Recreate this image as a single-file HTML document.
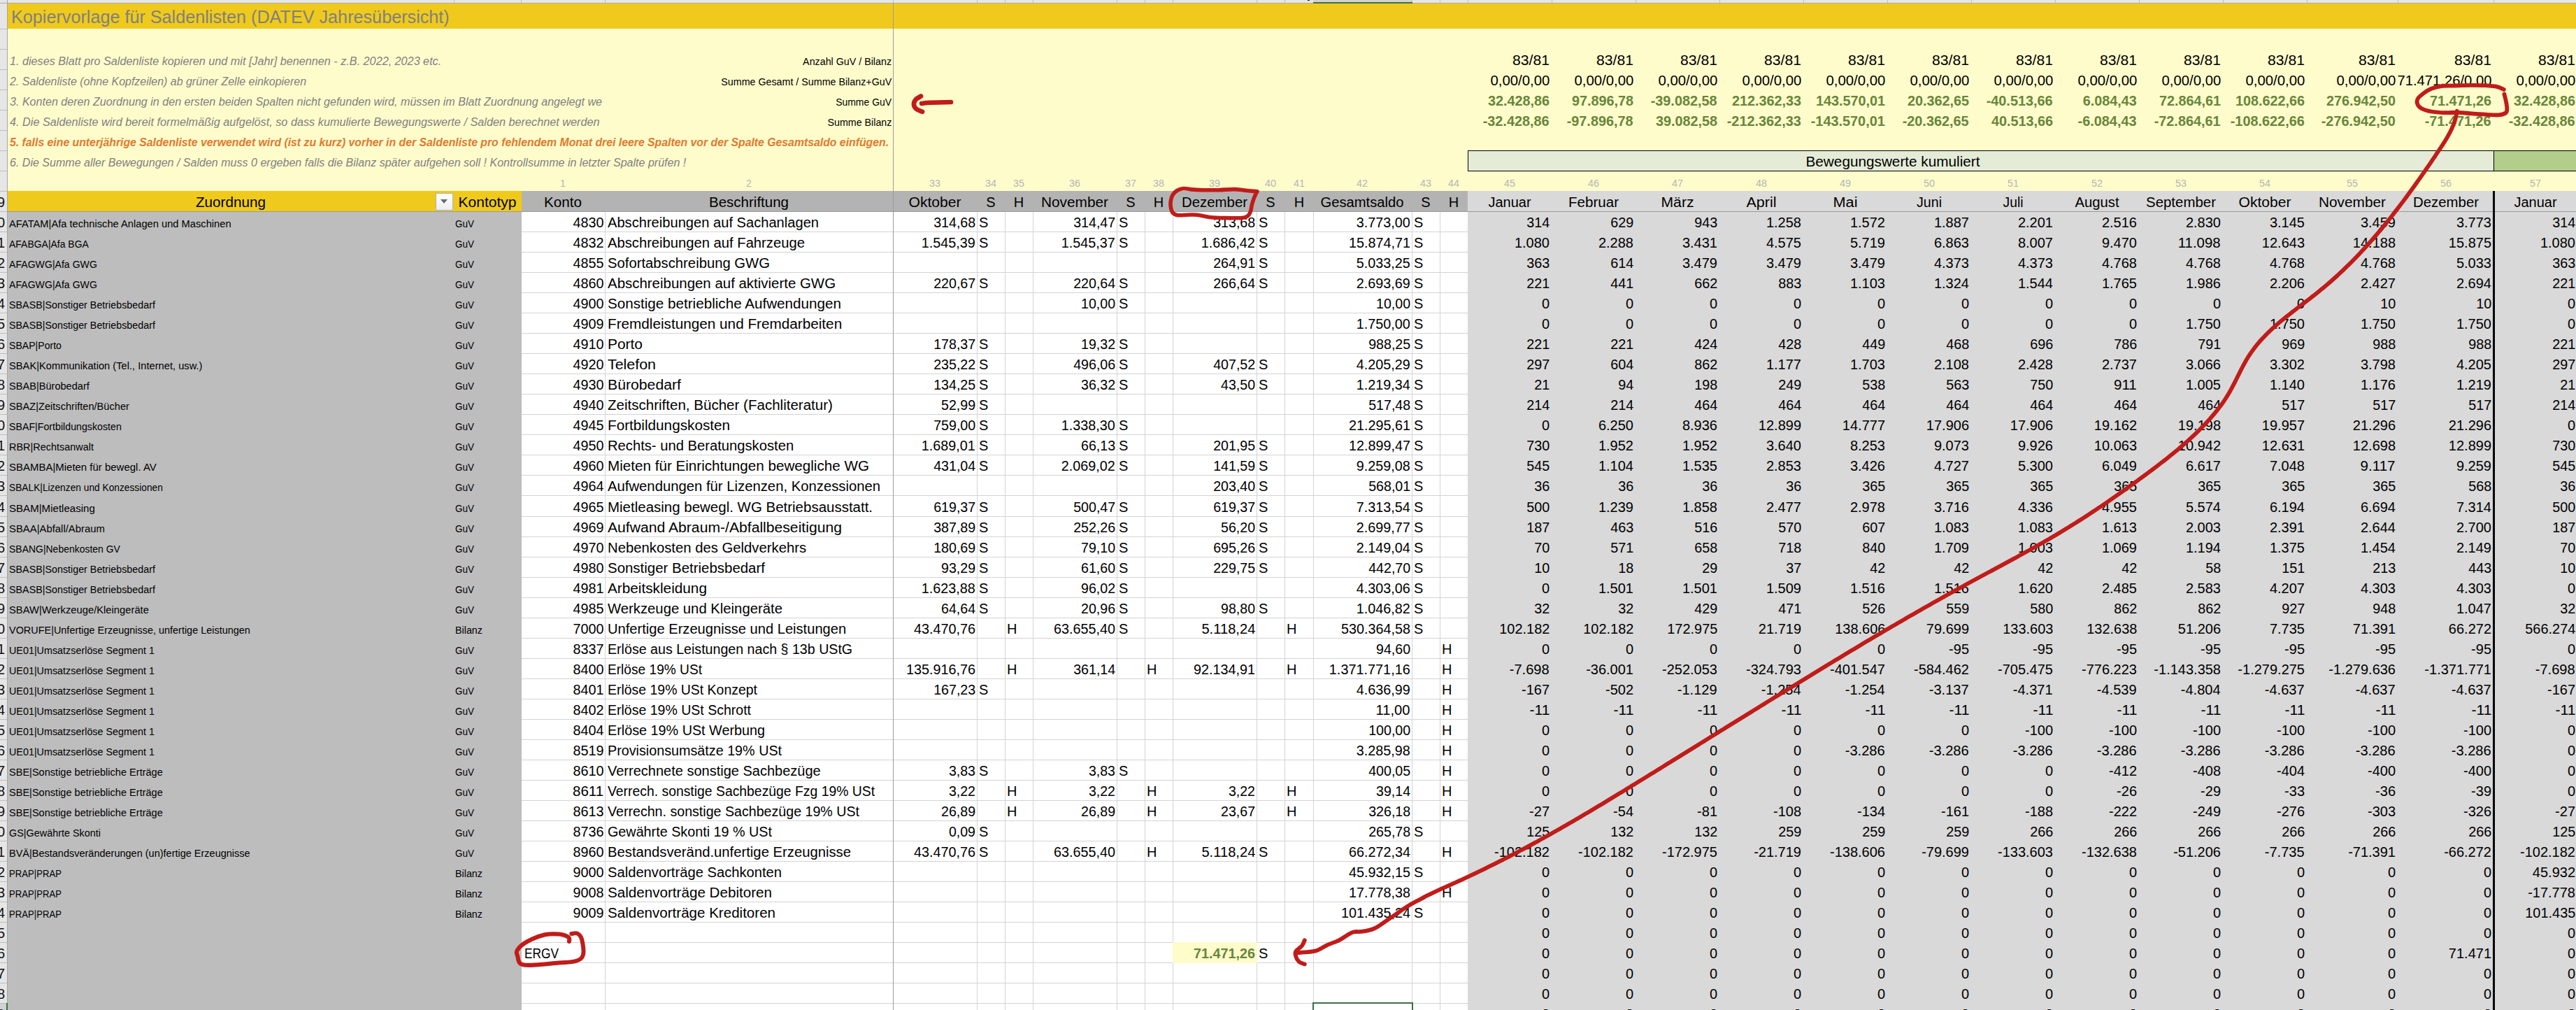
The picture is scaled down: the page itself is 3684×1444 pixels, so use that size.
<!DOCTYPE html><html><head><meta charset="utf-8"><style>

html,body{margin:0;padding:0}
body{width:3684px;height:1444px;overflow:hidden;position:relative;background:#fff;font-family:"Liberation Sans",sans-serif}
b{position:absolute;display:block;box-sizing:content-box}
i{position:absolute;font-style:normal;white-space:nowrap;line-height:0;color:#000;font-size:20px}
.t{font-size:20px}
.g{font-size:20px;font-weight:bold;color:#67863a}
.sm{font-size:14.7px}
.lb{font-size:14.18px}
.in{font-size:16.25px;font-style:italic;color:#808080}
.in5{font-size:15.8px;font-style:italic;font-weight:bold;color:#e07a2e}
.ti{font-size:25.2px;color:#808080}
.cn{font-size:14px;color:#b4b4b4}
.rh{font-size:20px;color:#111}
#rh{position:absolute;left:0;top:0;width:10px;height:1444px;overflow:hidden}
svg{position:absolute;left:0;top:0}

</style></head><body>
<b style="left:0px;top:0px;width:3684px;height:4px;background:#e6e6e6"></b>
<b style="left:0px;top:4px;width:3684px;height:1px;background:#ababab"></b>
<b style="left:649px;top:0px;width:1px;height:4px;background:#bdbdbd"></b>
<b style="left:745px;top:0px;width:1px;height:4px;background:#bdbdbd"></b>
<b style="left:865px;top:0px;width:1px;height:4px;background:#bdbdbd"></b>
<b style="left:1277px;top:0px;width:1px;height:4px;background:#bdbdbd"></b>
<b style="left:1397px;top:0px;width:1px;height:4px;background:#bdbdbd"></b>
<b style="left:1437px;top:0px;width:1px;height:4px;background:#bdbdbd"></b>
<b style="left:1477px;top:0px;width:1px;height:4px;background:#bdbdbd"></b>
<b style="left:1597px;top:0px;width:1px;height:4px;background:#bdbdbd"></b>
<b style="left:1637px;top:0px;width:1px;height:4px;background:#bdbdbd"></b>
<b style="left:1677px;top:0px;width:1px;height:4px;background:#bdbdbd"></b>
<b style="left:1797px;top:0px;width:1px;height:4px;background:#bdbdbd"></b>
<b style="left:1837px;top:0px;width:1px;height:4px;background:#bdbdbd"></b>
<b style="left:1878px;top:0px;width:1px;height:4px;background:#bdbdbd"></b>
<b style="left:2019px;top:0px;width:1px;height:4px;background:#bdbdbd"></b>
<b style="left:2059px;top:0px;width:1px;height:4px;background:#bdbdbd"></b>
<b style="left:2099px;top:0px;width:1px;height:4px;background:#bdbdbd"></b>
<b style="left:2219px;top:0px;width:1px;height:4px;background:#bdbdbd"></b>
<b style="left:2339px;top:0px;width:1px;height:4px;background:#bdbdbd"></b>
<b style="left:2459px;top:0px;width:1px;height:4px;background:#bdbdbd"></b>
<b style="left:2579px;top:0px;width:1px;height:4px;background:#bdbdbd"></b>
<b style="left:2699px;top:0px;width:1px;height:4px;background:#bdbdbd"></b>
<b style="left:2819px;top:0px;width:1px;height:4px;background:#bdbdbd"></b>
<b style="left:2939px;top:0px;width:1px;height:4px;background:#bdbdbd"></b>
<b style="left:3059px;top:0px;width:1px;height:4px;background:#bdbdbd"></b>
<b style="left:3179px;top:0px;width:1px;height:4px;background:#bdbdbd"></b>
<b style="left:3299px;top:0px;width:1px;height:4px;background:#bdbdbd"></b>
<b style="left:3429px;top:0px;width:1px;height:4px;background:#bdbdbd"></b>
<b style="left:3566px;top:0px;width:1px;height:4px;background:#bdbdbd"></b>
<b style="left:1878px;top:0px;width:141px;height:3px;background:#d2d2d2"></b>
<b style="left:1878px;top:3px;width:142px;height:2px;background:#3c6e47"></b>
<b style="left:1870px;top:0px;width:3px;height:1px;background:#111111"></b>
<b style="left:0px;top:5px;width:10px;height:1439px;background:#e6e6e6"></b>
<b style="left:10px;top:0px;width:1px;height:1444px;background:#a6a6a6"></b>
<b style="left:0px;top:41px;width:10px;height:1px;background:#bdbdbd"></b>
<b style="left:0px;top:70px;width:10px;height:1px;background:#bdbdbd"></b>
<b style="left:0px;top:99px;width:10px;height:1px;background:#bdbdbd"></b>
<b style="left:0px;top:128px;width:10px;height:1px;background:#bdbdbd"></b>
<b style="left:0px;top:157px;width:10px;height:1px;background:#bdbdbd"></b>
<b style="left:0px;top:186px;width:10px;height:1px;background:#bdbdbd"></b>
<b style="left:0px;top:215px;width:10px;height:1px;background:#bdbdbd"></b>
<b style="left:0px;top:244px;width:10px;height:1px;background:#bdbdbd"></b>
<b style="left:0px;top:273px;width:10px;height:1px;background:#bdbdbd"></b>
<b style="left:0px;top:302px;width:10px;height:1px;background:#bdbdbd"></b>
<b style="left:0px;top:331px;width:10px;height:1px;background:#bdbdbd"></b>
<b style="left:0px;top:360px;width:10px;height:1px;background:#bdbdbd"></b>
<b style="left:0px;top:389px;width:10px;height:1px;background:#bdbdbd"></b>
<b style="left:0px;top:418px;width:10px;height:1px;background:#bdbdbd"></b>
<b style="left:0px;top:447px;width:10px;height:1px;background:#bdbdbd"></b>
<b style="left:0px;top:476px;width:10px;height:1px;background:#bdbdbd"></b>
<b style="left:0px;top:505px;width:10px;height:1px;background:#bdbdbd"></b>
<b style="left:0px;top:534px;width:10px;height:1px;background:#bdbdbd"></b>
<b style="left:0px;top:563px;width:10px;height:1px;background:#bdbdbd"></b>
<b style="left:0px;top:592px;width:10px;height:1px;background:#bdbdbd"></b>
<b style="left:0px;top:621px;width:10px;height:1px;background:#bdbdbd"></b>
<b style="left:0px;top:650px;width:10px;height:1px;background:#bdbdbd"></b>
<b style="left:0px;top:679px;width:10px;height:1px;background:#bdbdbd"></b>
<b style="left:0px;top:708px;width:10px;height:1px;background:#bdbdbd"></b>
<b style="left:0px;top:738px;width:10px;height:1px;background:#bdbdbd"></b>
<b style="left:0px;top:767px;width:10px;height:1px;background:#bdbdbd"></b>
<b style="left:0px;top:796px;width:10px;height:1px;background:#bdbdbd"></b>
<b style="left:0px;top:825px;width:10px;height:1px;background:#bdbdbd"></b>
<b style="left:0px;top:854px;width:10px;height:1px;background:#bdbdbd"></b>
<b style="left:0px;top:883px;width:10px;height:1px;background:#bdbdbd"></b>
<b style="left:0px;top:912px;width:10px;height:1px;background:#bdbdbd"></b>
<b style="left:0px;top:941px;width:10px;height:1px;background:#bdbdbd"></b>
<b style="left:0px;top:970px;width:10px;height:1px;background:#bdbdbd"></b>
<b style="left:0px;top:999px;width:10px;height:1px;background:#bdbdbd"></b>
<b style="left:0px;top:1028px;width:10px;height:1px;background:#bdbdbd"></b>
<b style="left:0px;top:1057px;width:10px;height:1px;background:#bdbdbd"></b>
<b style="left:0px;top:1086px;width:10px;height:1px;background:#bdbdbd"></b>
<b style="left:0px;top:1115px;width:10px;height:1px;background:#bdbdbd"></b>
<b style="left:0px;top:1144px;width:10px;height:1px;background:#bdbdbd"></b>
<b style="left:0px;top:1173px;width:10px;height:1px;background:#bdbdbd"></b>
<b style="left:0px;top:1202px;width:10px;height:1px;background:#bdbdbd"></b>
<b style="left:0px;top:1231px;width:10px;height:1px;background:#bdbdbd"></b>
<b style="left:0px;top:1260px;width:10px;height:1px;background:#bdbdbd"></b>
<b style="left:0px;top:1289px;width:10px;height:1px;background:#bdbdbd"></b>
<b style="left:0px;top:1318px;width:10px;height:1px;background:#bdbdbd"></b>
<b style="left:0px;top:1347px;width:10px;height:1px;background:#bdbdbd"></b>
<b style="left:0px;top:1376px;width:10px;height:1px;background:#bdbdbd"></b>
<b style="left:0px;top:1405px;width:10px;height:1px;background:#bdbdbd"></b>
<b style="left:0px;top:1434px;width:10px;height:1px;background:#bdbdbd"></b>
<b style="left:0px;top:1435px;width:10px;height:9px;background:#d2d2d2"></b>
<b style="left:9px;top:1434px;width:2px;height:10px;background:#3c6e47"></b>
<b style="left:11px;top:5px;width:3673px;height:36px;background:#efca1c"></b>
<b style="left:11px;top:41px;width:3673px;height:261px;background:#fffccc"></b>
<b style="left:11px;top:273px;width:735px;height:29px;background:#efca1c"></b>
<b style="left:746px;top:273px;width:1353px;height:29px;background:#b3b3b3"></b>
<b style="left:2099px;top:273px;width:1585px;height:29px;background:#d9d9d9"></b>
<b style="left:11px;top:302px;width:3673px;height:1px;background:#9a9a9a"></b>
<b style="left:11px;top:303px;width:735px;height:1141px;background:#bdbdbd"></b>
<b style="left:746px;top:303px;width:1353px;height:1141px;background:#ffffff"></b>
<b style="left:2099px;top:303px;width:1585px;height:1141px;background:#d9d9d9"></b>
<b style="left:865px;top:303px;width:1px;height:1141px;background:#d4d4d4"></b>
<b style="left:1397px;top:303px;width:1px;height:1141px;background:#d4d4d4"></b>
<b style="left:1437px;top:303px;width:1px;height:1141px;background:#d4d4d4"></b>
<b style="left:1477px;top:303px;width:1px;height:1141px;background:#d4d4d4"></b>
<b style="left:1597px;top:303px;width:1px;height:1141px;background:#d4d4d4"></b>
<b style="left:1637px;top:303px;width:1px;height:1141px;background:#d4d4d4"></b>
<b style="left:1677px;top:303px;width:1px;height:1141px;background:#d4d4d4"></b>
<b style="left:1797px;top:303px;width:1px;height:1141px;background:#d4d4d4"></b>
<b style="left:1837px;top:303px;width:1px;height:1141px;background:#d4d4d4"></b>
<b style="left:1878px;top:303px;width:1px;height:1141px;background:#d4d4d4"></b>
<b style="left:2019px;top:303px;width:1px;height:1141px;background:#d4d4d4"></b>
<b style="left:2059px;top:303px;width:1px;height:1141px;background:#d4d4d4"></b>
<b style="left:746px;top:331px;width:1353px;height:1px;background:#d4d4d4"></b>
<b style="left:746px;top:360px;width:1353px;height:1px;background:#d4d4d4"></b>
<b style="left:746px;top:389px;width:1353px;height:1px;background:#d4d4d4"></b>
<b style="left:746px;top:418px;width:1353px;height:1px;background:#d4d4d4"></b>
<b style="left:746px;top:447px;width:1353px;height:1px;background:#d4d4d4"></b>
<b style="left:746px;top:476px;width:1353px;height:1px;background:#d4d4d4"></b>
<b style="left:746px;top:505px;width:1353px;height:1px;background:#d4d4d4"></b>
<b style="left:746px;top:534px;width:1353px;height:1px;background:#d4d4d4"></b>
<b style="left:746px;top:563px;width:1353px;height:1px;background:#d4d4d4"></b>
<b style="left:746px;top:592px;width:1353px;height:1px;background:#d4d4d4"></b>
<b style="left:746px;top:621px;width:1353px;height:1px;background:#d4d4d4"></b>
<b style="left:746px;top:650px;width:1353px;height:1px;background:#d4d4d4"></b>
<b style="left:746px;top:679px;width:1353px;height:1px;background:#d4d4d4"></b>
<b style="left:746px;top:708px;width:1353px;height:1px;background:#d4d4d4"></b>
<b style="left:746px;top:738px;width:1353px;height:1px;background:#d4d4d4"></b>
<b style="left:746px;top:767px;width:1353px;height:1px;background:#d4d4d4"></b>
<b style="left:746px;top:796px;width:1353px;height:1px;background:#d4d4d4"></b>
<b style="left:746px;top:825px;width:1353px;height:1px;background:#d4d4d4"></b>
<b style="left:746px;top:854px;width:1353px;height:1px;background:#d4d4d4"></b>
<b style="left:746px;top:883px;width:1353px;height:1px;background:#d4d4d4"></b>
<b style="left:746px;top:912px;width:1353px;height:1px;background:#d4d4d4"></b>
<b style="left:746px;top:941px;width:1353px;height:1px;background:#d4d4d4"></b>
<b style="left:746px;top:970px;width:1353px;height:1px;background:#d4d4d4"></b>
<b style="left:746px;top:999px;width:1353px;height:1px;background:#d4d4d4"></b>
<b style="left:746px;top:1028px;width:1353px;height:1px;background:#d4d4d4"></b>
<b style="left:746px;top:1057px;width:1353px;height:1px;background:#d4d4d4"></b>
<b style="left:746px;top:1086px;width:1353px;height:1px;background:#d4d4d4"></b>
<b style="left:746px;top:1115px;width:1353px;height:1px;background:#d4d4d4"></b>
<b style="left:746px;top:1144px;width:1353px;height:1px;background:#d4d4d4"></b>
<b style="left:746px;top:1173px;width:1353px;height:1px;background:#d4d4d4"></b>
<b style="left:746px;top:1202px;width:1353px;height:1px;background:#d4d4d4"></b>
<b style="left:746px;top:1231px;width:1353px;height:1px;background:#d4d4d4"></b>
<b style="left:746px;top:1260px;width:1353px;height:1px;background:#d4d4d4"></b>
<b style="left:746px;top:1289px;width:1353px;height:1px;background:#d4d4d4"></b>
<b style="left:746px;top:1318px;width:1353px;height:1px;background:#d4d4d4"></b>
<b style="left:746px;top:1347px;width:1353px;height:1px;background:#d4d4d4"></b>
<b style="left:746px;top:1376px;width:1353px;height:1px;background:#d4d4d4"></b>
<b style="left:746px;top:1405px;width:1353px;height:1px;background:#d4d4d4"></b>
<b style="left:746px;top:1434px;width:1353px;height:1px;background:#d4d4d4"></b>
<b style="left:1277px;top:5px;width:1px;height:1439px;background:#9c9c9c"></b>
<b style="left:1677px;top:1347px;width:121px;height:30px;background:#fffccc"></b>
<b style="left:2099px;top:215px;width:1585px;height:30px;background:#000000"></b>
<b style="left:2100px;top:216px;width:1466px;height:28px;background:#e4ecd7"></b>
<b style="left:3567px;top:216px;width:117px;height:28px;background:#b3cd8a"></b>
<b style="left:3565px;top:273px;width:3px;height:1171px;background:#000000"></b>
<b style="left:1877px;top:1433px;width:140px;height:20px;border:2px solid #3c6e47"></b>
<b style="left:623px;top:276px;width:23px;height:23px;border:1px solid #a9b3c7;background:linear-gradient(#ffffff,#eceef3)"></b>
<b style="left:630px;top:285px;width:0;height:0;border-left:5px solid transparent;border-right:5px solid transparent;border-top:6px solid #6a6a6a"></b>
<i class="rh" style="right:3677px;top:289.07px">9</i>
<i class="rh" style="right:3677px;top:318.07px">0</i>
<i class="rh" style="right:3677px;top:347.07px">1</i>
<i class="rh" style="right:3677px;top:376.07px">2</i>
<i class="rh" style="right:3677px;top:405.07px">3</i>
<i class="rh" style="right:3677px;top:434.07px">4</i>
<i class="rh" style="right:3677px;top:463.07px">5</i>
<i class="rh" style="right:3677px;top:492.07px">6</i>
<i class="rh" style="right:3677px;top:521.07px">7</i>
<i class="rh" style="right:3677px;top:550.07px">8</i>
<i class="rh" style="right:3677px;top:579.07px">9</i>
<i class="rh" style="right:3677px;top:608.07px">0</i>
<i class="rh" style="right:3677px;top:637.07px">1</i>
<i class="rh" style="right:3677px;top:666.07px">2</i>
<i class="rh" style="right:3677px;top:695.07px">3</i>
<i class="rh" style="right:3677px;top:725.07px">4</i>
<i class="rh" style="right:3677px;top:754.07px">5</i>
<i class="rh" style="right:3677px;top:783.07px">6</i>
<i class="rh" style="right:3677px;top:812.07px">7</i>
<i class="rh" style="right:3677px;top:841.07px">8</i>
<i class="rh" style="right:3677px;top:870.07px">9</i>
<i class="rh" style="right:3677px;top:899.07px">0</i>
<i class="rh" style="right:3677px;top:928.07px">1</i>
<i class="rh" style="right:3677px;top:957.07px">2</i>
<i class="rh" style="right:3677px;top:986.07px">3</i>
<i class="rh" style="right:3677px;top:1015.07px">4</i>
<i class="rh" style="right:3677px;top:1044.07px">5</i>
<i class="rh" style="right:3677px;top:1073.07px">6</i>
<i class="rh" style="right:3677px;top:1102.07px">7</i>
<i class="rh" style="right:3677px;top:1131.07px">8</i>
<i class="rh" style="right:3677px;top:1160.07px">9</i>
<i class="rh" style="right:3677px;top:1189.07px">0</i>
<i class="rh" style="right:3677px;top:1218.07px">1</i>
<i class="rh" style="right:3677px;top:1247.07px">2</i>
<i class="rh" style="right:3677px;top:1276.07px">3</i>
<i class="rh" style="right:3677px;top:1305.07px">4</i>
<i class="rh" style="right:3677px;top:1334.07px">5</i>
<i class="rh" style="right:3677px;top:1363.07px">6</i>
<i class="rh" style="right:3677px;top:1392.07px">7</i>
<i class="rh" style="right:3677px;top:1421.07px">8</i>
<i class="rh" style="right:3677px;top:1450.07px">9</i>
<i class="ti" style="left:16px;top:24.34px">Kopiervorlage für Saldenlisten (DATEV Jahresübersicht)</i>
<i class="in" style="left:14px;top:87.37px;transform:scaleX(0.996);transform-origin:left">1. dieses Blatt pro Saldenliste kopieren und mit [Jahr] benennen - z.B. 2022, 2023 etc.</i>
<i class="in" style="left:14px;top:116.37px;transform:scaleX(0.982);transform-origin:left">2. Saldenliste (ohne Kopfzeilen) ab grüner Zelle einkopieren</i>
<i class="in" style="left:14px;top:145.37px;transform:scaleX(0.990);transform-origin:left">3. Konten deren Zuordnung in den ersten beiden Spalten nicht gefunden wird, müssen im Blatt Zuordnung angelegt we</i>
<i class="in" style="left:14px;top:174.37px">4. Die Saldenliste wird bereit formelmäßig aufgelöst, so dass kumulierte Bewegungswerte / Salden berechnet werden</i>
<i class="in5" style="left:14px;top:203.53px">5. falls eine unterjährige Saldenliste verwendet wird (ist zu kurz) vorher in der Saldenliste pro fehlendem Monat drei leere Spalten vor der Spalte Gesamtsaldo einfügen.</i>
<i class="in" style="left:14px;top:232.37px;transform:scaleX(0.987);transform-origin:left">6. Die Summe aller Bewegungen / Salden muss 0 ergeben falls die Bilanz später aufgehen soll ! Kontrollsumme in letzter Spalte prüfen !</i>
<i class="lb" style="right:2409px;top:88.09px;transform:scaleX(1.007);transform-origin:right">Anzahl GuV / Bilanz</i>
<i class="lb" style="right:2409px;top:117.09px;transform:scaleX(1.007);transform-origin:right">Summe Gesamt / Summe Bilanz+GuV</i>
<i class="lb" style="right:2409px;top:146.09px;transform:scaleX(0.986);transform-origin:right">Summe GuV</i>
<i class="lb" style="right:2409px;top:175.09px;transform:scaleX(1.006);transform-origin:right">Summe Bilanz</i>
<i class="t" style="right:1468px;top:86.07px;transform:scaleX(1.059);transform-origin:right">83/81</i>
<i class="t" style="right:1468px;top:115.07px;transform:scaleX(1.019);transform-origin:right">0,00/0,00</i>
<i class="g" style="right:1468px;top:144.07px;transform:scaleX(0.989);transform-origin:right">32.428,86</i>
<i class="g" style="right:1468px;top:173.07px;transform:scaleX(0.993);transform-origin:right">-32.428,86</i>
<i class="t" style="right:1348px;top:86.07px;transform:scaleX(1.059);transform-origin:right">83/81</i>
<i class="t" style="right:1348px;top:115.07px;transform:scaleX(1.019);transform-origin:right">0,00/0,00</i>
<i class="g" style="right:1348px;top:144.07px;transform:scaleX(0.989);transform-origin:right">97.896,78</i>
<i class="g" style="right:1348px;top:173.07px;transform:scaleX(0.993);transform-origin:right">-97.896,78</i>
<i class="t" style="right:1228px;top:86.07px;transform:scaleX(1.059);transform-origin:right">83/81</i>
<i class="t" style="right:1228px;top:115.07px;transform:scaleX(1.019);transform-origin:right">0,00/0,00</i>
<i class="g" style="right:1228px;top:144.07px;transform:scaleX(0.993);transform-origin:right">-39.082,58</i>
<i class="g" style="right:1228px;top:173.07px;transform:scaleX(0.989);transform-origin:right">39.082,58</i>
<i class="t" style="right:1108px;top:86.07px;transform:scaleX(1.059);transform-origin:right">83/81</i>
<i class="t" style="right:1108px;top:115.07px;transform:scaleX(1.019);transform-origin:right">0,00/0,00</i>
<i class="g" style="right:1108px;top:144.07px;transform:scaleX(0.989);transform-origin:right">212.362,33</i>
<i class="g" style="right:1108px;top:173.07px;transform:scaleX(0.993);transform-origin:right">-212.362,33</i>
<i class="t" style="right:988px;top:86.07px;transform:scaleX(1.059);transform-origin:right">83/81</i>
<i class="t" style="right:988px;top:115.07px;transform:scaleX(1.019);transform-origin:right">0,00/0,00</i>
<i class="g" style="right:988px;top:144.07px;transform:scaleX(0.989);transform-origin:right">143.570,01</i>
<i class="g" style="right:988px;top:173.07px;transform:scaleX(0.993);transform-origin:right">-143.570,01</i>
<i class="t" style="right:868px;top:86.07px;transform:scaleX(1.059);transform-origin:right">83/81</i>
<i class="t" style="right:868px;top:115.07px;transform:scaleX(1.019);transform-origin:right">0,00/0,00</i>
<i class="g" style="right:868px;top:144.07px;transform:scaleX(0.989);transform-origin:right">20.362,65</i>
<i class="g" style="right:868px;top:173.07px;transform:scaleX(0.993);transform-origin:right">-20.362,65</i>
<i class="t" style="right:748px;top:86.07px;transform:scaleX(1.059);transform-origin:right">83/81</i>
<i class="t" style="right:748px;top:115.07px;transform:scaleX(1.019);transform-origin:right">0,00/0,00</i>
<i class="g" style="right:748px;top:144.07px;transform:scaleX(0.993);transform-origin:right">-40.513,66</i>
<i class="g" style="right:748px;top:173.07px;transform:scaleX(0.989);transform-origin:right">40.513,66</i>
<i class="t" style="right:628px;top:86.07px;transform:scaleX(1.059);transform-origin:right">83/81</i>
<i class="t" style="right:628px;top:115.07px;transform:scaleX(1.019);transform-origin:right">0,00/0,00</i>
<i class="g" style="right:628px;top:144.07px;transform:scaleX(0.989);transform-origin:right">6.084,43</i>
<i class="g" style="right:628px;top:173.07px;transform:scaleX(0.994);transform-origin:right">-6.084,43</i>
<i class="t" style="right:508px;top:86.07px;transform:scaleX(1.059);transform-origin:right">83/81</i>
<i class="t" style="right:508px;top:115.07px;transform:scaleX(1.019);transform-origin:right">0,00/0,00</i>
<i class="g" style="right:508px;top:144.07px;transform:scaleX(0.989);transform-origin:right">72.864,61</i>
<i class="g" style="right:508px;top:173.07px;transform:scaleX(0.993);transform-origin:right">-72.864,61</i>
<i class="t" style="right:388px;top:86.07px;transform:scaleX(1.059);transform-origin:right">83/81</i>
<i class="t" style="right:388px;top:115.07px;transform:scaleX(1.019);transform-origin:right">0,00/0,00</i>
<i class="g" style="right:388px;top:144.07px;transform:scaleX(0.989);transform-origin:right">108.622,66</i>
<i class="g" style="right:388px;top:173.07px;transform:scaleX(0.993);transform-origin:right">-108.622,66</i>
<i class="t" style="right:258px;top:86.07px;transform:scaleX(1.059);transform-origin:right">83/81</i>
<i class="t" style="right:258px;top:115.07px;transform:scaleX(1.019);transform-origin:right">0,00/0,00</i>
<i class="g" style="right:258px;top:144.07px;transform:scaleX(0.989);transform-origin:right">276.942,50</i>
<i class="g" style="right:258px;top:173.07px;transform:scaleX(0.993);transform-origin:right">-276.942,50</i>
<i class="t" style="right:121px;top:86.07px;transform:scaleX(1.059);transform-origin:right">83/81</i>
<i class="t" style="right:121px;top:115.07px;transform:scaleX(1.012);transform-origin:right">71.471,26/0,00</i>
<i class="g" style="right:121px;top:144.07px;transform:scaleX(0.989);transform-origin:right">71.471,26</i>
<i class="g" style="right:121px;top:173.07px;transform:scaleX(0.993);transform-origin:right">-71.471,26</i>
<i class="t" style="right:1px;top:86.07px;transform:scaleX(1.059);transform-origin:right">83/81</i>
<i class="t" style="right:1px;top:115.07px;transform:scaleX(1.019);transform-origin:right">0,00/0,00</i>
<i class="g" style="right:1px;top:144.07px;transform:scaleX(0.989);transform-origin:right">32.428,86</i>
<i class="g" style="right:1px;top:173.07px;transform:scaleX(0.993);transform-origin:right">-32.428,86</i>
<i class="t" style="left:2707px;width:0;display:flex;justify-content:center;top:231.07px;transform:scaleX(1.037);transform-origin:center">Bewegungswerte kumuliert</i>
<i class="cn" style="left:805px;width:0;display:flex;justify-content:center;top:262.15px">1</i>
<i class="cn" style="left:1071px;width:0;display:flex;justify-content:center;top:262.15px">2</i>
<i class="cn" style="left:1337px;width:0;display:flex;justify-content:center;top:262.15px;transform:scaleX(1.027);transform-origin:center">33</i>
<i class="cn" style="left:1417px;width:0;display:flex;justify-content:center;top:262.15px;transform:scaleX(1.027);transform-origin:center">34</i>
<i class="cn" style="left:1457px;width:0;display:flex;justify-content:center;top:262.15px;transform:scaleX(1.027);transform-origin:center">35</i>
<i class="cn" style="left:1537px;width:0;display:flex;justify-content:center;top:262.15px;transform:scaleX(1.027);transform-origin:center">36</i>
<i class="cn" style="left:1617px;width:0;display:flex;justify-content:center;top:262.15px;transform:scaleX(1.027);transform-origin:center">37</i>
<i class="cn" style="left:1657px;width:0;display:flex;justify-content:center;top:262.15px;transform:scaleX(1.027);transform-origin:center">38</i>
<i class="cn" style="left:1737px;width:0;display:flex;justify-content:center;top:262.15px;transform:scaleX(1.027);transform-origin:center">39</i>
<i class="cn" style="left:1817px;width:0;display:flex;justify-content:center;top:262.15px;transform:scaleX(1.027);transform-origin:center">40</i>
<i class="cn" style="left:1858px;width:0;display:flex;justify-content:center;top:262.15px;transform:scaleX(1.027);transform-origin:center">41</i>
<i class="cn" style="left:1948px;width:0;display:flex;justify-content:center;top:262.15px;transform:scaleX(1.027);transform-origin:center">42</i>
<i class="cn" style="left:2039px;width:0;display:flex;justify-content:center;top:262.15px;transform:scaleX(1.027);transform-origin:center">43</i>
<i class="cn" style="left:2079px;width:0;display:flex;justify-content:center;top:262.15px;transform:scaleX(1.027);transform-origin:center">44</i>
<i class="cn" style="left:2159px;width:0;display:flex;justify-content:center;top:262.15px;transform:scaleX(1.027);transform-origin:center">45</i>
<i class="cn" style="left:2279px;width:0;display:flex;justify-content:center;top:262.15px;transform:scaleX(1.027);transform-origin:center">46</i>
<i class="cn" style="left:2399px;width:0;display:flex;justify-content:center;top:262.15px;transform:scaleX(1.027);transform-origin:center">47</i>
<i class="cn" style="left:2519px;width:0;display:flex;justify-content:center;top:262.15px;transform:scaleX(1.027);transform-origin:center">48</i>
<i class="cn" style="left:2639px;width:0;display:flex;justify-content:center;top:262.15px;transform:scaleX(1.027);transform-origin:center">49</i>
<i class="cn" style="left:2759px;width:0;display:flex;justify-content:center;top:262.15px;transform:scaleX(1.027);transform-origin:center">50</i>
<i class="cn" style="left:2879px;width:0;display:flex;justify-content:center;top:262.15px;transform:scaleX(1.027);transform-origin:center">51</i>
<i class="cn" style="left:2999px;width:0;display:flex;justify-content:center;top:262.15px;transform:scaleX(1.027);transform-origin:center">52</i>
<i class="cn" style="left:3119px;width:0;display:flex;justify-content:center;top:262.15px;transform:scaleX(1.027);transform-origin:center">53</i>
<i class="cn" style="left:3239px;width:0;display:flex;justify-content:center;top:262.15px;transform:scaleX(1.027);transform-origin:center">54</i>
<i class="cn" style="left:3364px;width:0;display:flex;justify-content:center;top:262.15px;transform:scaleX(1.027);transform-origin:center">55</i>
<i class="cn" style="left:3498px;width:0;display:flex;justify-content:center;top:262.15px;transform:scaleX(1.027);transform-origin:center">56</i>
<i class="cn" style="left:3626px;width:0;display:flex;justify-content:center;top:262.15px;transform:scaleX(1.027);transform-origin:center">57</i>
<i class="t" style="left:330px;width:0;display:flex;justify-content:center;top:289.07px;transform:scaleX(1.034);transform-origin:center">Zuordnung</i>
<i class="t" style="left:697px;width:0;display:flex;justify-content:center;top:289.07px;transform:scaleX(1.051);transform-origin:center">Kontotyp</i>
<i class="t" style="left:805px;width:0;display:flex;justify-content:center;top:289.07px;transform:scaleX(1.033);transform-origin:center">Konto</i>
<i class="t" style="left:1071px;width:0;display:flex;justify-content:center;top:289.07px;transform:scaleX(1.025);transform-origin:center">Beschriftung</i>
<i class="t" style="left:1337px;width:0;display:flex;justify-content:center;top:289.07px;transform:scaleX(1.054);transform-origin:center">Oktober</i>
<i class="t" style="left:1417px;width:0;display:flex;justify-content:center;top:289.07px">S</i>
<i class="t" style="left:1457px;width:0;display:flex;justify-content:center;top:289.07px">H</i>
<i class="t" style="left:1537px;width:0;display:flex;justify-content:center;top:289.07px;transform:scaleX(1.041);transform-origin:center">November</i>
<i class="t" style="left:1617px;width:0;display:flex;justify-content:center;top:289.07px">S</i>
<i class="t" style="left:1657px;width:0;display:flex;justify-content:center;top:289.07px">H</i>
<i class="t" style="left:1737px;width:0;display:flex;justify-content:center;top:289.07px;transform:scaleX(1.019);transform-origin:center">Dezember</i>
<i class="t" style="left:1817px;width:0;display:flex;justify-content:center;top:289.07px">S</i>
<i class="t" style="left:1858px;width:0;display:flex;justify-content:center;top:289.07px">H</i>
<i class="t" style="left:1948px;width:0;display:flex;justify-content:center;top:289.07px;transform:scaleX(1.010);transform-origin:center">Gesamtsaldo</i>
<i class="t" style="left:2039px;width:0;display:flex;justify-content:center;top:289.07px">S</i>
<i class="t" style="left:2079px;width:0;display:flex;justify-content:center;top:289.07px">H</i>
<i class="t" style="left:2159px;width:0;display:flex;justify-content:center;top:289.07px">Januar</i>
<i class="t" style="left:2279px;width:0;display:flex;justify-content:center;top:289.07px;transform:scaleX(1.028);transform-origin:center">Februar</i>
<i class="t" style="left:2399px;width:0;display:flex;justify-content:center;top:289.07px;transform:scaleX(1.058);transform-origin:center">März</i>
<i class="t" style="left:2519px;width:0;display:flex;justify-content:center;top:289.07px;transform:scaleX(1.075);transform-origin:center">April</i>
<i class="t" style="left:2639px;width:0;display:flex;justify-content:center;top:289.07px;transform:scaleX(1.086);transform-origin:center">Mai</i>
<i class="t" style="left:2759px;width:0;display:flex;justify-content:center;top:289.07px;transform:scaleX(0.981);transform-origin:center">Juni</i>
<i class="t" style="left:2879px;width:0;display:flex;justify-content:center;top:289.07px;transform:scaleX(0.966);transform-origin:center">Juli</i>
<i class="t" style="left:2999px;width:0;display:flex;justify-content:center;top:289.07px;transform:scaleX(1.012);transform-origin:center">August</i>
<i class="t" style="left:3119px;width:0;display:flex;justify-content:center;top:289.07px;transform:scaleX(1.022);transform-origin:center">September</i>
<i class="t" style="left:3239px;width:0;display:flex;justify-content:center;top:289.07px;transform:scaleX(1.054);transform-origin:center">Oktober</i>
<i class="t" style="left:3364px;width:0;display:flex;justify-content:center;top:289.07px;transform:scaleX(1.041);transform-origin:center">November</i>
<i class="t" style="left:3498px;width:0;display:flex;justify-content:center;top:289.07px;transform:scaleX(1.019);transform-origin:center">Dezember</i>
<i class="t" style="left:3626px;width:0;display:flex;justify-content:center;top:289.07px">Januar</i>
<i class="sm" style="left:13px;top:319.91px">AFATAM|Afa technische Anlagen und Maschinen</i>
<i class="sm" style="left:651px;top:319.91px;transform:scaleX(0.918);transform-origin:left">GuV</i>
<i class="t" style="right:2821px;top:318.07px;transform:scaleX(0.989);transform-origin:right">4830</i>
<i class="t" style="left:869px;top:318.07px;transform:scaleX(1.006);transform-origin:left">Abschreibungen auf Sachanlagen</i>
<i class="t" style="right:2289px;top:318.07px;transform:scaleX(0.981);transform-origin:right">314,68</i>
<i class="t" style="left:1400px;top:318.07px">S</i>
<i class="t" style="right:2089px;top:318.07px;transform:scaleX(0.981);transform-origin:right">314,47</i>
<i class="t" style="left:1600px;top:318.07px">S</i>
<i class="t" style="right:1889px;top:318.07px;transform:scaleX(0.981);transform-origin:right">313,68</i>
<i class="t" style="left:1800px;top:318.07px">S</i>
<i class="t" style="right:1667px;top:318.07px;transform:scaleX(0.989);transform-origin:right">3.773,00</i>
<i class="t" style="left:2022px;top:318.07px">S</i>
<i class="sm" style="left:13px;top:348.91px;transform:scaleX(0.951);transform-origin:left">AFABGA|Afa BGA</i>
<i class="sm" style="left:651px;top:348.91px;transform:scaleX(0.918);transform-origin:left">GuV</i>
<i class="t" style="right:2821px;top:347.07px;transform:scaleX(0.989);transform-origin:right">4832</i>
<i class="t" style="left:869px;top:347.07px;transform:scaleX(1.010);transform-origin:left">Abschreibungen auf Fahrzeuge</i>
<i class="t" style="right:2289px;top:347.07px;transform:scaleX(0.989);transform-origin:right">1.545,39</i>
<i class="t" style="left:1400px;top:347.07px">S</i>
<i class="t" style="right:2089px;top:347.07px;transform:scaleX(0.989);transform-origin:right">1.545,37</i>
<i class="t" style="left:1600px;top:347.07px">S</i>
<i class="t" style="right:1889px;top:347.07px;transform:scaleX(0.989);transform-origin:right">1.686,42</i>
<i class="t" style="left:1800px;top:347.07px">S</i>
<i class="t" style="right:1667px;top:347.07px;transform:scaleX(0.989);transform-origin:right">15.874,71</i>
<i class="t" style="left:2022px;top:347.07px">S</i>
<i class="sm" style="left:13px;top:377.91px;transform:scaleX(0.960);transform-origin:left">AFAGWG|Afa GWG</i>
<i class="sm" style="left:651px;top:377.91px;transform:scaleX(0.918);transform-origin:left">GuV</i>
<i class="t" style="right:2821px;top:376.07px;transform:scaleX(0.989);transform-origin:right">4855</i>
<i class="t" style="left:869px;top:376.07px;transform:scaleX(1.013);transform-origin:left">Sofortabschreibung GWG</i>
<i class="t" style="right:1889px;top:376.07px;transform:scaleX(0.981);transform-origin:right">264,91</i>
<i class="t" style="left:1800px;top:376.07px">S</i>
<i class="t" style="right:1667px;top:376.07px;transform:scaleX(0.989);transform-origin:right">5.033,25</i>
<i class="t" style="left:2022px;top:376.07px">S</i>
<i class="sm" style="left:13px;top:406.91px;transform:scaleX(0.960);transform-origin:left">AFAGWG|Afa GWG</i>
<i class="sm" style="left:651px;top:406.91px;transform:scaleX(0.918);transform-origin:left">GuV</i>
<i class="t" style="right:2821px;top:405.07px;transform:scaleX(0.989);transform-origin:right">4860</i>
<i class="t" style="left:869px;top:405.07px;transform:scaleX(1.022);transform-origin:left">Abschreibungen auf aktivierte GWG</i>
<i class="t" style="right:2289px;top:405.07px;transform:scaleX(0.981);transform-origin:right">220,67</i>
<i class="t" style="left:1400px;top:405.07px">S</i>
<i class="t" style="right:2089px;top:405.07px;transform:scaleX(0.981);transform-origin:right">220,64</i>
<i class="t" style="left:1600px;top:405.07px">S</i>
<i class="t" style="right:1889px;top:405.07px;transform:scaleX(0.981);transform-origin:right">266,64</i>
<i class="t" style="left:1800px;top:405.07px">S</i>
<i class="t" style="right:1667px;top:405.07px;transform:scaleX(0.989);transform-origin:right">2.693,69</i>
<i class="t" style="left:2022px;top:405.07px">S</i>
<i class="sm" style="left:13px;top:435.91px;transform:scaleX(0.974);transform-origin:left">SBASB|Sonstiger Betriebsbedarf</i>
<i class="sm" style="left:651px;top:435.91px;transform:scaleX(0.918);transform-origin:left">GuV</i>
<i class="t" style="right:2821px;top:434.07px;transform:scaleX(0.989);transform-origin:right">4900</i>
<i class="t" style="left:869px;top:434.07px;transform:scaleX(1.032);transform-origin:left">Sonstige betriebliche Aufwendungen</i>
<i class="t" style="right:2089px;top:434.07px;transform:scaleX(0.979);transform-origin:right">10,00</i>
<i class="t" style="left:1600px;top:434.07px">S</i>
<i class="t" style="right:1667px;top:434.07px;transform:scaleX(0.979);transform-origin:right">10,00</i>
<i class="t" style="left:2022px;top:434.07px">S</i>
<i class="sm" style="left:13px;top:464.91px;transform:scaleX(0.974);transform-origin:left">SBASB|Sonstiger Betriebsbedarf</i>
<i class="sm" style="left:651px;top:464.91px;transform:scaleX(0.918);transform-origin:left">GuV</i>
<i class="t" style="right:2821px;top:463.07px;transform:scaleX(0.989);transform-origin:right">4909</i>
<i class="t" style="left:869px;top:463.07px;transform:scaleX(1.036);transform-origin:left">Fremdleistungen und Fremdarbeiten</i>
<i class="t" style="right:1667px;top:463.07px;transform:scaleX(0.989);transform-origin:right">1.750,00</i>
<i class="t" style="left:2022px;top:463.07px">S</i>
<i class="sm" style="left:13px;top:493.91px;transform:scaleX(0.959);transform-origin:left">SBAP|Porto</i>
<i class="sm" style="left:651px;top:493.91px;transform:scaleX(0.918);transform-origin:left">GuV</i>
<i class="t" style="right:2821px;top:492.07px;transform:scaleX(0.989);transform-origin:right">4910</i>
<i class="t" style="left:869px;top:492.07px;transform:scaleX(1.046);transform-origin:left">Porto</i>
<i class="t" style="right:2289px;top:492.07px;transform:scaleX(0.981);transform-origin:right">178,37</i>
<i class="t" style="left:1400px;top:492.07px">S</i>
<i class="t" style="right:2089px;top:492.07px;transform:scaleX(0.979);transform-origin:right">19,32</i>
<i class="t" style="left:1600px;top:492.07px">S</i>
<i class="t" style="right:1667px;top:492.07px;transform:scaleX(0.981);transform-origin:right">988,25</i>
<i class="t" style="left:2022px;top:492.07px">S</i>
<i class="sm" style="left:13px;top:522.91px">SBAK|Kommunikation (Tel., Internet, usw.)</i>
<i class="sm" style="left:651px;top:522.91px;transform:scaleX(0.918);transform-origin:left">GuV</i>
<i class="t" style="right:2821px;top:521.07px;transform:scaleX(0.989);transform-origin:right">4920</i>
<i class="t" style="left:869px;top:521.07px;transform:scaleX(1.070);transform-origin:left">Telefon</i>
<i class="t" style="right:2289px;top:521.07px;transform:scaleX(0.981);transform-origin:right">235,22</i>
<i class="t" style="left:1400px;top:521.07px">S</i>
<i class="t" style="right:2089px;top:521.07px;transform:scaleX(0.981);transform-origin:right">496,06</i>
<i class="t" style="left:1600px;top:521.07px">S</i>
<i class="t" style="right:1889px;top:521.07px;transform:scaleX(0.981);transform-origin:right">407,52</i>
<i class="t" style="left:1800px;top:521.07px">S</i>
<i class="t" style="right:1667px;top:521.07px;transform:scaleX(0.989);transform-origin:right">4.205,29</i>
<i class="t" style="left:2022px;top:521.07px">S</i>
<i class="sm" style="left:13px;top:551.91px;transform:scaleX(0.993);transform-origin:left">SBAB|Bürobedarf</i>
<i class="sm" style="left:651px;top:551.91px;transform:scaleX(0.918);transform-origin:left">GuV</i>
<i class="t" style="right:2821px;top:550.07px;transform:scaleX(0.989);transform-origin:right">4930</i>
<i class="t" style="left:869px;top:550.07px;transform:scaleX(1.061);transform-origin:left">Bürobedarf</i>
<i class="t" style="right:2289px;top:550.07px;transform:scaleX(0.981);transform-origin:right">134,25</i>
<i class="t" style="left:1400px;top:550.07px">S</i>
<i class="t" style="right:2089px;top:550.07px;transform:scaleX(0.979);transform-origin:right">36,32</i>
<i class="t" style="left:1600px;top:550.07px">S</i>
<i class="t" style="right:1889px;top:550.07px;transform:scaleX(0.979);transform-origin:right">43,50</i>
<i class="t" style="left:1800px;top:550.07px">S</i>
<i class="t" style="right:1667px;top:550.07px;transform:scaleX(0.989);transform-origin:right">1.219,34</i>
<i class="t" style="left:2022px;top:550.07px">S</i>
<i class="sm" style="left:13px;top:580.91px;transform:scaleX(0.995);transform-origin:left">SBAZ|Zeitschriften/Bücher</i>
<i class="sm" style="left:651px;top:580.91px;transform:scaleX(0.918);transform-origin:left">GuV</i>
<i class="t" style="right:2821px;top:579.07px;transform:scaleX(0.989);transform-origin:right">4940</i>
<i class="t" style="left:869px;top:579.07px;transform:scaleX(1.027);transform-origin:left">Zeitschriften, Bücher (Fachliteratur)</i>
<i class="t" style="right:2289px;top:579.07px;transform:scaleX(0.979);transform-origin:right">52,99</i>
<i class="t" style="left:1400px;top:579.07px">S</i>
<i class="t" style="right:1667px;top:579.07px;transform:scaleX(0.981);transform-origin:right">517,48</i>
<i class="t" style="left:2022px;top:579.07px">S</i>
<i class="sm" style="left:13px;top:609.91px;transform:scaleX(0.967);transform-origin:left">SBAF|Fortbildungskosten</i>
<i class="sm" style="left:651px;top:609.91px;transform:scaleX(0.918);transform-origin:left">GuV</i>
<i class="t" style="right:2821px;top:608.07px;transform:scaleX(0.989);transform-origin:right">4945</i>
<i class="t" style="left:869px;top:608.07px;transform:scaleX(1.036);transform-origin:left">Fortbildungskosten</i>
<i class="t" style="right:2289px;top:608.07px;transform:scaleX(0.981);transform-origin:right">759,00</i>
<i class="t" style="left:1400px;top:608.07px">S</i>
<i class="t" style="right:2089px;top:608.07px;transform:scaleX(0.989);transform-origin:right">1.338,30</i>
<i class="t" style="left:1600px;top:608.07px">S</i>
<i class="t" style="right:1667px;top:608.07px;transform:scaleX(0.989);transform-origin:right">21.295,61</i>
<i class="t" style="left:2022px;top:608.07px">S</i>
<i class="sm" style="left:13px;top:638.91px;transform:scaleX(0.983);transform-origin:left">RBR|Rechtsanwalt</i>
<i class="sm" style="left:651px;top:638.91px;transform:scaleX(0.918);transform-origin:left">GuV</i>
<i class="t" style="right:2821px;top:637.07px;transform:scaleX(0.989);transform-origin:right">4950</i>
<i class="t" style="left:869px;top:637.07px;transform:scaleX(1.010);transform-origin:left">Rechts- und Beratungskosten</i>
<i class="t" style="right:2289px;top:637.07px;transform:scaleX(0.989);transform-origin:right">1.689,01</i>
<i class="t" style="left:1400px;top:637.07px">S</i>
<i class="t" style="right:2089px;top:637.07px;transform:scaleX(0.979);transform-origin:right">66,13</i>
<i class="t" style="left:1600px;top:637.07px">S</i>
<i class="t" style="right:1889px;top:637.07px;transform:scaleX(0.981);transform-origin:right">201,95</i>
<i class="t" style="left:1800px;top:637.07px">S</i>
<i class="t" style="right:1667px;top:637.07px;transform:scaleX(0.989);transform-origin:right">12.899,47</i>
<i class="t" style="left:2022px;top:637.07px">S</i>
<i class="sm" style="left:13px;top:667.91px;transform:scaleX(1.019);transform-origin:left">SBAMBA|Mieten für bewegl. AV</i>
<i class="sm" style="left:651px;top:667.91px;transform:scaleX(0.918);transform-origin:left">GuV</i>
<i class="t" style="right:2821px;top:666.07px;transform:scaleX(0.989);transform-origin:right">4960</i>
<i class="t" style="left:869px;top:666.07px;transform:scaleX(1.032);transform-origin:left">Mieten für Einrichtungen bewegliche WG</i>
<i class="t" style="right:2289px;top:666.07px;transform:scaleX(0.981);transform-origin:right">431,04</i>
<i class="t" style="left:1400px;top:666.07px">S</i>
<i class="t" style="right:2089px;top:666.07px;transform:scaleX(0.989);transform-origin:right">2.069,02</i>
<i class="t" style="left:1600px;top:666.07px">S</i>
<i class="t" style="right:1889px;top:666.07px;transform:scaleX(0.981);transform-origin:right">141,59</i>
<i class="t" style="left:1800px;top:666.07px">S</i>
<i class="t" style="right:1667px;top:666.07px;transform:scaleX(0.989);transform-origin:right">9.259,08</i>
<i class="t" style="left:2022px;top:666.07px">S</i>
<i class="sm" style="left:13px;top:696.91px;transform:scaleX(0.936);transform-origin:left">SBALK|Lizenzen und Konzessionen</i>
<i class="sm" style="left:651px;top:696.91px;transform:scaleX(0.918);transform-origin:left">GuV</i>
<i class="t" style="right:2821px;top:695.07px;transform:scaleX(0.989);transform-origin:right">4964</i>
<i class="t" style="left:869px;top:695.07px;transform:scaleX(1.014);transform-origin:left">Aufwendungen für Lizenzen, Konzessionen</i>
<i class="t" style="right:1889px;top:695.07px;transform:scaleX(0.981);transform-origin:right">203,40</i>
<i class="t" style="left:1800px;top:695.07px">S</i>
<i class="t" style="right:1667px;top:695.07px;transform:scaleX(0.981);transform-origin:right">568,01</i>
<i class="t" style="left:2022px;top:695.07px">S</i>
<i class="sm" style="left:13px;top:726.91px;transform:scaleX(1.026);transform-origin:left">SBAM|Mietleasing</i>
<i class="sm" style="left:651px;top:726.91px;transform:scaleX(0.918);transform-origin:left">GuV</i>
<i class="t" style="right:2821px;top:725.07px;transform:scaleX(0.989);transform-origin:right">4965</i>
<i class="t" style="left:869px;top:725.07px;transform:scaleX(1.024);transform-origin:left">Mietleasing bewegl. WG Betriebsausstatt.</i>
<i class="t" style="right:2289px;top:725.07px;transform:scaleX(0.981);transform-origin:right">619,37</i>
<i class="t" style="left:1400px;top:725.07px">S</i>
<i class="t" style="right:2089px;top:725.07px;transform:scaleX(0.981);transform-origin:right">500,47</i>
<i class="t" style="left:1600px;top:725.07px">S</i>
<i class="t" style="right:1889px;top:725.07px;transform:scaleX(0.981);transform-origin:right">619,37</i>
<i class="t" style="left:1800px;top:725.07px">S</i>
<i class="t" style="right:1667px;top:725.07px;transform:scaleX(0.989);transform-origin:right">7.313,54</i>
<i class="t" style="left:2022px;top:725.07px">S</i>
<i class="sm" style="left:13px;top:755.91px;transform:scaleX(1.012);transform-origin:left">SBAA|Abfall/Abraum</i>
<i class="sm" style="left:651px;top:755.91px;transform:scaleX(0.918);transform-origin:left">GuV</i>
<i class="t" style="right:2821px;top:754.07px;transform:scaleX(0.989);transform-origin:right">4969</i>
<i class="t" style="left:869px;top:754.07px;transform:scaleX(1.057);transform-origin:left">Aufwand Abraum-/Abfallbeseitigung</i>
<i class="t" style="right:2289px;top:754.07px;transform:scaleX(0.981);transform-origin:right">387,89</i>
<i class="t" style="left:1400px;top:754.07px">S</i>
<i class="t" style="right:2089px;top:754.07px;transform:scaleX(0.981);transform-origin:right">252,26</i>
<i class="t" style="left:1600px;top:754.07px">S</i>
<i class="t" style="right:1889px;top:754.07px;transform:scaleX(0.979);transform-origin:right">56,20</i>
<i class="t" style="left:1800px;top:754.07px">S</i>
<i class="t" style="right:1667px;top:754.07px;transform:scaleX(0.989);transform-origin:right">2.699,77</i>
<i class="t" style="left:2022px;top:754.07px">S</i>
<i class="sm" style="left:13px;top:784.91px;transform:scaleX(0.951);transform-origin:left">SBANG|Nebenkosten GV</i>
<i class="sm" style="left:651px;top:784.91px;transform:scaleX(0.918);transform-origin:left">GuV</i>
<i class="t" style="right:2821px;top:783.07px;transform:scaleX(0.989);transform-origin:right">4970</i>
<i class="t" style="left:869px;top:783.07px;transform:scaleX(1.014);transform-origin:left">Nebenkosten des Geldverkehrs</i>
<i class="t" style="right:2289px;top:783.07px;transform:scaleX(0.981);transform-origin:right">180,69</i>
<i class="t" style="left:1400px;top:783.07px">S</i>
<i class="t" style="right:2089px;top:783.07px;transform:scaleX(0.979);transform-origin:right">79,10</i>
<i class="t" style="left:1600px;top:783.07px">S</i>
<i class="t" style="right:1889px;top:783.07px;transform:scaleX(0.981);transform-origin:right">695,26</i>
<i class="t" style="left:1800px;top:783.07px">S</i>
<i class="t" style="right:1667px;top:783.07px;transform:scaleX(0.989);transform-origin:right">2.149,04</i>
<i class="t" style="left:2022px;top:783.07px">S</i>
<i class="sm" style="left:13px;top:813.91px;transform:scaleX(0.974);transform-origin:left">SBASB|Sonstiger Betriebsbedarf</i>
<i class="sm" style="left:651px;top:813.91px;transform:scaleX(0.918);transform-origin:left">GuV</i>
<i class="t" style="right:2821px;top:812.07px;transform:scaleX(0.989);transform-origin:right">4980</i>
<i class="t" style="left:869px;top:812.07px;transform:scaleX(1.022);transform-origin:left">Sonstiger Betriebsbedarf</i>
<i class="t" style="right:2289px;top:812.07px;transform:scaleX(0.979);transform-origin:right">93,29</i>
<i class="t" style="left:1400px;top:812.07px">S</i>
<i class="t" style="right:2089px;top:812.07px;transform:scaleX(0.979);transform-origin:right">61,60</i>
<i class="t" style="left:1600px;top:812.07px">S</i>
<i class="t" style="right:1889px;top:812.07px;transform:scaleX(0.981);transform-origin:right">229,75</i>
<i class="t" style="left:1800px;top:812.07px">S</i>
<i class="t" style="right:1667px;top:812.07px;transform:scaleX(0.981);transform-origin:right">442,70</i>
<i class="t" style="left:2022px;top:812.07px">S</i>
<i class="sm" style="left:13px;top:842.91px;transform:scaleX(0.974);transform-origin:left">SBASB|Sonstiger Betriebsbedarf</i>
<i class="sm" style="left:651px;top:842.91px;transform:scaleX(0.918);transform-origin:left">GuV</i>
<i class="t" style="right:2821px;top:841.07px;transform:scaleX(0.989);transform-origin:right">4981</i>
<i class="t" style="left:869px;top:841.07px;transform:scaleX(1.038);transform-origin:left">Arbeitskleidung</i>
<i class="t" style="right:2289px;top:841.07px;transform:scaleX(0.989);transform-origin:right">1.623,88</i>
<i class="t" style="left:1400px;top:841.07px">S</i>
<i class="t" style="right:2089px;top:841.07px;transform:scaleX(0.979);transform-origin:right">96,02</i>
<i class="t" style="left:1600px;top:841.07px">S</i>
<i class="t" style="right:1667px;top:841.07px;transform:scaleX(0.989);transform-origin:right">4.303,06</i>
<i class="t" style="left:2022px;top:841.07px">S</i>
<i class="sm" style="left:13px;top:871.91px;transform:scaleX(1.005);transform-origin:left">SBAW|Werkzeuge/Kleingeräte</i>
<i class="sm" style="left:651px;top:871.91px;transform:scaleX(0.918);transform-origin:left">GuV</i>
<i class="t" style="right:2821px;top:870.07px;transform:scaleX(0.989);transform-origin:right">4985</i>
<i class="t" style="left:869px;top:870.07px;transform:scaleX(1.014);transform-origin:left">Werkzeuge und Kleingeräte</i>
<i class="t" style="right:2289px;top:870.07px;transform:scaleX(0.979);transform-origin:right">64,64</i>
<i class="t" style="left:1400px;top:870.07px">S</i>
<i class="t" style="right:2089px;top:870.07px;transform:scaleX(0.979);transform-origin:right">20,96</i>
<i class="t" style="left:1600px;top:870.07px">S</i>
<i class="t" style="right:1889px;top:870.07px;transform:scaleX(0.979);transform-origin:right">98,80</i>
<i class="t" style="left:1800px;top:870.07px">S</i>
<i class="t" style="right:1667px;top:870.07px;transform:scaleX(0.989);transform-origin:right">1.046,82</i>
<i class="t" style="left:2022px;top:870.07px">S</i>
<i class="sm" style="left:13px;top:900.91px;transform:scaleX(0.983);transform-origin:left">VORUFE|Unfertige Erzeugnisse, unfertige Leistungen</i>
<i class="sm" style="left:651px;top:900.91px;transform:scaleX(0.974);transform-origin:left">Bilanz</i>
<i class="t" style="right:2821px;top:899.07px;transform:scaleX(0.989);transform-origin:right">7000</i>
<i class="t" style="left:869px;top:899.07px;transform:scaleX(1.006);transform-origin:left">Unfertige Erzeugnisse und Leistungen</i>
<i class="t" style="right:2289px;top:899.07px;transform:scaleX(0.989);transform-origin:right">43.470,76</i>
<i class="t" style="left:1440px;top:899.07px">H</i>
<i class="t" style="right:2089px;top:899.07px;transform:scaleX(0.989);transform-origin:right">63.655,40</i>
<i class="t" style="left:1600px;top:899.07px">S</i>
<i class="t" style="right:1889px;top:899.07px;transform:scaleX(1.008);transform-origin:right">5.118,24</i>
<i class="t" style="left:1840px;top:899.07px">H</i>
<i class="t" style="right:1667px;top:899.07px;transform:scaleX(0.989);transform-origin:right">530.364,58</i>
<i class="t" style="left:2022px;top:899.07px">S</i>
<i class="sm" style="left:13px;top:929.91px;transform:scaleX(0.977);transform-origin:left">UE01|Umsatzserlöse Segment 1</i>
<i class="sm" style="left:651px;top:929.91px;transform:scaleX(0.918);transform-origin:left">GuV</i>
<i class="t" style="right:2821px;top:928.07px;transform:scaleX(0.989);transform-origin:right">8337</i>
<i class="t" style="left:869px;top:928.07px;transform:scaleX(0.981);transform-origin:left">Erlöse aus Leistungen nach § 13b UStG</i>
<i class="t" style="right:1667px;top:928.07px;transform:scaleX(0.979);transform-origin:right">94,60</i>
<i class="t" style="left:2062px;top:928.07px">H</i>
<i class="sm" style="left:13px;top:958.91px;transform:scaleX(0.977);transform-origin:left">UE01|Umsatzserlöse Segment 1</i>
<i class="sm" style="left:651px;top:958.91px;transform:scaleX(0.918);transform-origin:left">GuV</i>
<i class="t" style="right:2821px;top:957.07px;transform:scaleX(0.989);transform-origin:right">8400</i>
<i class="t" style="left:869px;top:957.07px;transform:scaleX(0.956);transform-origin:left">Erlöse 19% USt</i>
<i class="t" style="right:2289px;top:957.07px;transform:scaleX(0.989);transform-origin:right">135.916,76</i>
<i class="t" style="left:1440px;top:957.07px">H</i>
<i class="t" style="right:2089px;top:957.07px;transform:scaleX(0.981);transform-origin:right">361,14</i>
<i class="t" style="left:1640px;top:957.07px">H</i>
<i class="t" style="right:1889px;top:957.07px;transform:scaleX(0.989);transform-origin:right">92.134,91</i>
<i class="t" style="left:1840px;top:957.07px">H</i>
<i class="t" style="right:1667px;top:957.07px;transform:scaleX(0.993);transform-origin:right">1.371.771,16</i>
<i class="t" style="left:2062px;top:957.07px">H</i>
<i class="sm" style="left:13px;top:987.91px;transform:scaleX(0.977);transform-origin:left">UE01|Umsatzserlöse Segment 1</i>
<i class="sm" style="left:651px;top:987.91px;transform:scaleX(0.918);transform-origin:left">GuV</i>
<i class="t" style="right:2821px;top:986.07px;transform:scaleX(0.989);transform-origin:right">8401</i>
<i class="t" style="left:869px;top:986.07px;transform:scaleX(0.972);transform-origin:left">Erlöse 19% USt Konzept</i>
<i class="t" style="right:2289px;top:986.07px;transform:scaleX(0.981);transform-origin:right">167,23</i>
<i class="t" style="left:1400px;top:986.07px">S</i>
<i class="t" style="right:1667px;top:986.07px;transform:scaleX(0.989);transform-origin:right">4.636,99</i>
<i class="t" style="left:2062px;top:986.07px">H</i>
<i class="sm" style="left:13px;top:1016.91px;transform:scaleX(0.977);transform-origin:left">UE01|Umsatzserlöse Segment 1</i>
<i class="sm" style="left:651px;top:1016.91px;transform:scaleX(0.918);transform-origin:left">GuV</i>
<i class="t" style="right:2821px;top:1015.07px;transform:scaleX(0.989);transform-origin:right">8402</i>
<i class="t" style="left:869px;top:1015.07px;transform:scaleX(0.976);transform-origin:left">Erlöse 19% USt Schrott</i>
<i class="t" style="right:1667px;top:1015.07px;transform:scaleX(1.009);transform-origin:right">11,00</i>
<i class="t" style="left:2062px;top:1015.07px">H</i>
<i class="sm" style="left:13px;top:1045.91px;transform:scaleX(0.977);transform-origin:left">UE01|Umsatzserlöse Segment 1</i>
<i class="sm" style="left:651px;top:1045.91px;transform:scaleX(0.918);transform-origin:left">GuV</i>
<i class="t" style="right:2821px;top:1044.07px;transform:scaleX(0.989);transform-origin:right">8404</i>
<i class="t" style="left:869px;top:1044.07px;transform:scaleX(0.989);transform-origin:left">Erlöse 19% USt Werbung</i>
<i class="t" style="right:1667px;top:1044.07px;transform:scaleX(0.981);transform-origin:right">100,00</i>
<i class="t" style="left:2062px;top:1044.07px">H</i>
<i class="sm" style="left:13px;top:1074.91px;transform:scaleX(0.977);transform-origin:left">UE01|Umsatzserlöse Segment 1</i>
<i class="sm" style="left:651px;top:1074.91px;transform:scaleX(0.918);transform-origin:left">GuV</i>
<i class="t" style="right:2821px;top:1073.07px;transform:scaleX(0.989);transform-origin:right">8519</i>
<i class="t" style="left:869px;top:1073.07px;transform:scaleX(0.987);transform-origin:left">Provisionsumsätze 19% USt</i>
<i class="t" style="right:1667px;top:1073.07px;transform:scaleX(0.989);transform-origin:right">3.285,98</i>
<i class="t" style="left:2062px;top:1073.07px">H</i>
<i class="sm" style="left:13px;top:1103.91px;transform:scaleX(0.991);transform-origin:left">SBE|Sonstige betriebliche Erträge</i>
<i class="sm" style="left:651px;top:1103.91px;transform:scaleX(0.918);transform-origin:left">GuV</i>
<i class="t" style="right:2821px;top:1102.07px;transform:scaleX(0.989);transform-origin:right">8610</i>
<i class="t" style="left:869px;top:1102.07px">Verrechnete sonstige Sachbezüge</i>
<i class="t" style="right:2289px;top:1102.07px;transform:scaleX(0.976);transform-origin:right">3,83</i>
<i class="t" style="left:1400px;top:1102.07px">S</i>
<i class="t" style="right:2089px;top:1102.07px;transform:scaleX(0.976);transform-origin:right">3,83</i>
<i class="t" style="left:1600px;top:1102.07px">S</i>
<i class="t" style="right:1667px;top:1102.07px;transform:scaleX(0.981);transform-origin:right">400,05</i>
<i class="t" style="left:2062px;top:1102.07px">H</i>
<i class="sm" style="left:13px;top:1132.91px;transform:scaleX(0.991);transform-origin:left">SBE|Sonstige betriebliche Erträge</i>
<i class="sm" style="left:651px;top:1132.91px;transform:scaleX(0.918);transform-origin:left">GuV</i>
<i class="t" style="right:2821px;top:1131.07px;transform:scaleX(1.023);transform-origin:right">8611</i>
<i class="t" style="left:869px;top:1131.07px;transform:scaleX(0.968);transform-origin:left">Verrech. sonstige Sachbezüge Fzg 19% USt</i>
<i class="t" style="right:2289px;top:1131.07px;transform:scaleX(0.976);transform-origin:right">3,22</i>
<i class="t" style="left:1440px;top:1131.07px">H</i>
<i class="t" style="right:2089px;top:1131.07px;transform:scaleX(0.976);transform-origin:right">3,22</i>
<i class="t" style="left:1640px;top:1131.07px">H</i>
<i class="t" style="right:1889px;top:1131.07px;transform:scaleX(0.976);transform-origin:right">3,22</i>
<i class="t" style="left:1840px;top:1131.07px">H</i>
<i class="t" style="right:1667px;top:1131.07px;transform:scaleX(0.979);transform-origin:right">39,14</i>
<i class="t" style="left:2062px;top:1131.07px">H</i>
<i class="sm" style="left:13px;top:1161.91px;transform:scaleX(0.991);transform-origin:left">SBE|Sonstige betriebliche Erträge</i>
<i class="sm" style="left:651px;top:1161.91px;transform:scaleX(0.918);transform-origin:left">GuV</i>
<i class="t" style="right:2821px;top:1160.07px;transform:scaleX(0.989);transform-origin:right">8613</i>
<i class="t" style="left:869px;top:1160.07px;transform:scaleX(0.981);transform-origin:left">Verrechn. sonstige Sachbezüge 19% USt</i>
<i class="t" style="right:2289px;top:1160.07px;transform:scaleX(0.979);transform-origin:right">26,89</i>
<i class="t" style="left:1440px;top:1160.07px">H</i>
<i class="t" style="right:2089px;top:1160.07px;transform:scaleX(0.979);transform-origin:right">26,89</i>
<i class="t" style="left:1640px;top:1160.07px">H</i>
<i class="t" style="right:1889px;top:1160.07px;transform:scaleX(0.979);transform-origin:right">23,67</i>
<i class="t" style="left:1840px;top:1160.07px">H</i>
<i class="t" style="right:1667px;top:1160.07px;transform:scaleX(0.981);transform-origin:right">326,18</i>
<i class="t" style="left:2062px;top:1160.07px">H</i>
<i class="sm" style="left:13px;top:1190.91px;transform:scaleX(0.980);transform-origin:left">GS|Gewährte Skonti</i>
<i class="sm" style="left:651px;top:1190.91px;transform:scaleX(0.918);transform-origin:left">GuV</i>
<i class="t" style="right:2821px;top:1189.07px;transform:scaleX(0.989);transform-origin:right">8736</i>
<i class="t" style="left:869px;top:1189.07px;transform:scaleX(0.988);transform-origin:left">Gewährte Skonti 19 % USt</i>
<i class="t" style="right:2289px;top:1189.07px;transform:scaleX(0.976);transform-origin:right">0,09</i>
<i class="t" style="left:1400px;top:1189.07px">S</i>
<i class="t" style="right:1667px;top:1189.07px;transform:scaleX(0.981);transform-origin:right">265,78</i>
<i class="t" style="left:2022px;top:1189.07px">S</i>
<i class="sm" style="left:13px;top:1219.91px;transform:scaleX(0.987);transform-origin:left">BVÄ|Bestandsveränderungen (un)fertige Erzeugnisse</i>
<i class="sm" style="left:651px;top:1219.91px;transform:scaleX(0.918);transform-origin:left">GuV</i>
<i class="t" style="right:2821px;top:1218.07px;transform:scaleX(0.989);transform-origin:right">8960</i>
<i class="t" style="left:869px;top:1218.07px;transform:scaleX(1.013);transform-origin:left">Bestandsveränd.unfertige Erzeugnisse</i>
<i class="t" style="right:2289px;top:1218.07px;transform:scaleX(0.989);transform-origin:right">43.470,76</i>
<i class="t" style="left:1400px;top:1218.07px">S</i>
<i class="t" style="right:2089px;top:1218.07px;transform:scaleX(0.989);transform-origin:right">63.655,40</i>
<i class="t" style="left:1640px;top:1218.07px">H</i>
<i class="t" style="right:1889px;top:1218.07px;transform:scaleX(1.008);transform-origin:right">5.118,24</i>
<i class="t" style="left:1800px;top:1218.07px">S</i>
<i class="t" style="right:1667px;top:1218.07px;transform:scaleX(0.989);transform-origin:right">66.272,34</i>
<i class="t" style="left:2062px;top:1218.07px">H</i>
<i class="sm" style="left:13px;top:1248.91px;transform:scaleX(0.894);transform-origin:left">PRAP|PRAP</i>
<i class="sm" style="left:651px;top:1248.91px;transform:scaleX(0.974);transform-origin:left">Bilanz</i>
<i class="t" style="right:2821px;top:1247.07px;transform:scaleX(0.989);transform-origin:right">9000</i>
<i class="t" style="left:869px;top:1247.07px;transform:scaleX(1.009);transform-origin:left">Saldenvorträge Sachkonten</i>
<i class="t" style="right:1667px;top:1247.07px;transform:scaleX(0.989);transform-origin:right">45.932,15</i>
<i class="t" style="left:2022px;top:1247.07px">S</i>
<i class="sm" style="left:13px;top:1277.91px;transform:scaleX(0.894);transform-origin:left">PRAP|PRAP</i>
<i class="sm" style="left:651px;top:1277.91px;transform:scaleX(0.974);transform-origin:left">Bilanz</i>
<i class="t" style="right:2821px;top:1276.07px;transform:scaleX(0.989);transform-origin:right">9008</i>
<i class="t" style="left:869px;top:1276.07px;transform:scaleX(1.031);transform-origin:left">Saldenvorträge Debitoren</i>
<i class="t" style="right:1667px;top:1276.07px;transform:scaleX(0.989);transform-origin:right">17.778,38</i>
<i class="t" style="left:2062px;top:1276.07px">H</i>
<i class="sm" style="left:13px;top:1306.91px;transform:scaleX(0.894);transform-origin:left">PRAP|PRAP</i>
<i class="sm" style="left:651px;top:1306.91px;transform:scaleX(0.974);transform-origin:left">Bilanz</i>
<i class="t" style="right:2821px;top:1305.07px;transform:scaleX(0.989);transform-origin:right">9009</i>
<i class="t" style="left:869px;top:1305.07px;transform:scaleX(1.028);transform-origin:left">Saldenvorträge Kreditoren</i>
<i class="t" style="right:1667px;top:1305.07px;transform:scaleX(0.989);transform-origin:right">101.435,24</i>
<i class="t" style="left:2022px;top:1305.07px">S</i>
<i class="t" style="left:750px;top:1363.07px;transform:scaleX(0.865);transform-origin:left">ERGV</i>
<i class="g" style="right:1889px;top:1363.07px;transform:scaleX(0.989);transform-origin:right">71.471,26</i>
<i class="t" style="left:1800px;top:1363.07px">S</i>
<i class="t" style="right:1468px;top:318.07px;transform:scaleX(0.989);transform-origin:right">314</i>
<i class="t" style="right:1348px;top:318.07px;transform:scaleX(0.989);transform-origin:right">629</i>
<i class="t" style="right:1228px;top:318.07px;transform:scaleX(0.989);transform-origin:right">943</i>
<i class="t" style="right:1108px;top:318.07px">1.258</i>
<i class="t" style="right:988px;top:318.07px">1.572</i>
<i class="t" style="right:868px;top:318.07px">1.887</i>
<i class="t" style="right:748px;top:318.07px">2.201</i>
<i class="t" style="right:628px;top:318.07px">2.516</i>
<i class="t" style="right:508px;top:318.07px">2.830</i>
<i class="t" style="right:388px;top:318.07px">3.145</i>
<i class="t" style="right:258px;top:318.07px">3.459</i>
<i class="t" style="right:121px;top:318.07px">3.773</i>
<i class="t" style="right:1px;top:318.07px;transform:scaleX(0.989);transform-origin:right">314</i>
<i class="t" style="right:1468px;top:347.07px">1.080</i>
<i class="t" style="right:1348px;top:347.07px">2.288</i>
<i class="t" style="right:1228px;top:347.07px">3.431</i>
<i class="t" style="right:1108px;top:347.07px">4.575</i>
<i class="t" style="right:988px;top:347.07px">5.719</i>
<i class="t" style="right:868px;top:347.07px">6.863</i>
<i class="t" style="right:748px;top:347.07px">8.007</i>
<i class="t" style="right:628px;top:347.07px">9.470</i>
<i class="t" style="right:508px;top:347.07px;transform:scaleX(1.022);transform-origin:right">11.098</i>
<i class="t" style="right:388px;top:347.07px">12.643</i>
<i class="t" style="right:258px;top:347.07px">14.188</i>
<i class="t" style="right:121px;top:347.07px">15.875</i>
<i class="t" style="right:1px;top:347.07px">1.080</i>
<i class="t" style="right:1468px;top:376.07px;transform:scaleX(0.989);transform-origin:right">363</i>
<i class="t" style="right:1348px;top:376.07px;transform:scaleX(0.989);transform-origin:right">614</i>
<i class="t" style="right:1228px;top:376.07px">3.479</i>
<i class="t" style="right:1108px;top:376.07px">3.479</i>
<i class="t" style="right:988px;top:376.07px">3.479</i>
<i class="t" style="right:868px;top:376.07px">4.373</i>
<i class="t" style="right:748px;top:376.07px">4.373</i>
<i class="t" style="right:628px;top:376.07px">4.768</i>
<i class="t" style="right:508px;top:376.07px">4.768</i>
<i class="t" style="right:388px;top:376.07px">4.768</i>
<i class="t" style="right:258px;top:376.07px">4.768</i>
<i class="t" style="right:121px;top:376.07px">5.033</i>
<i class="t" style="right:1px;top:376.07px;transform:scaleX(0.989);transform-origin:right">363</i>
<i class="t" style="right:1468px;top:405.07px;transform:scaleX(0.989);transform-origin:right">221</i>
<i class="t" style="right:1348px;top:405.07px;transform:scaleX(0.989);transform-origin:right">441</i>
<i class="t" style="right:1228px;top:405.07px;transform:scaleX(0.989);transform-origin:right">662</i>
<i class="t" style="right:1108px;top:405.07px;transform:scaleX(0.989);transform-origin:right">883</i>
<i class="t" style="right:988px;top:405.07px">1.103</i>
<i class="t" style="right:868px;top:405.07px">1.324</i>
<i class="t" style="right:748px;top:405.07px">1.544</i>
<i class="t" style="right:628px;top:405.07px">1.765</i>
<i class="t" style="right:508px;top:405.07px">1.986</i>
<i class="t" style="right:388px;top:405.07px">2.206</i>
<i class="t" style="right:258px;top:405.07px">2.427</i>
<i class="t" style="right:121px;top:405.07px">2.694</i>
<i class="t" style="right:1px;top:405.07px;transform:scaleX(0.989);transform-origin:right">221</i>
<i class="t" style="right:1468px;top:434.07px">0</i>
<i class="t" style="right:1348px;top:434.07px">0</i>
<i class="t" style="right:1228px;top:434.07px">0</i>
<i class="t" style="right:1108px;top:434.07px">0</i>
<i class="t" style="right:988px;top:434.07px">0</i>
<i class="t" style="right:868px;top:434.07px">0</i>
<i class="t" style="right:748px;top:434.07px">0</i>
<i class="t" style="right:628px;top:434.07px">0</i>
<i class="t" style="right:508px;top:434.07px">0</i>
<i class="t" style="right:388px;top:434.07px">0</i>
<i class="t" style="right:258px;top:434.07px;transform:scaleX(0.989);transform-origin:right">10</i>
<i class="t" style="right:121px;top:434.07px;transform:scaleX(0.989);transform-origin:right">10</i>
<i class="t" style="right:1px;top:434.07px">0</i>
<i class="t" style="right:1468px;top:463.07px">0</i>
<i class="t" style="right:1348px;top:463.07px">0</i>
<i class="t" style="right:1228px;top:463.07px">0</i>
<i class="t" style="right:1108px;top:463.07px">0</i>
<i class="t" style="right:988px;top:463.07px">0</i>
<i class="t" style="right:868px;top:463.07px">0</i>
<i class="t" style="right:748px;top:463.07px">0</i>
<i class="t" style="right:628px;top:463.07px">0</i>
<i class="t" style="right:508px;top:463.07px">1.750</i>
<i class="t" style="right:388px;top:463.07px">1.750</i>
<i class="t" style="right:258px;top:463.07px">1.750</i>
<i class="t" style="right:121px;top:463.07px">1.750</i>
<i class="t" style="right:1px;top:463.07px">0</i>
<i class="t" style="right:1468px;top:492.07px;transform:scaleX(0.989);transform-origin:right">221</i>
<i class="t" style="right:1348px;top:492.07px;transform:scaleX(0.989);transform-origin:right">221</i>
<i class="t" style="right:1228px;top:492.07px;transform:scaleX(0.989);transform-origin:right">424</i>
<i class="t" style="right:1108px;top:492.07px;transform:scaleX(0.989);transform-origin:right">428</i>
<i class="t" style="right:988px;top:492.07px;transform:scaleX(0.989);transform-origin:right">449</i>
<i class="t" style="right:868px;top:492.07px;transform:scaleX(0.989);transform-origin:right">468</i>
<i class="t" style="right:748px;top:492.07px;transform:scaleX(0.989);transform-origin:right">696</i>
<i class="t" style="right:628px;top:492.07px;transform:scaleX(0.989);transform-origin:right">786</i>
<i class="t" style="right:508px;top:492.07px;transform:scaleX(0.989);transform-origin:right">791</i>
<i class="t" style="right:388px;top:492.07px;transform:scaleX(0.989);transform-origin:right">969</i>
<i class="t" style="right:258px;top:492.07px;transform:scaleX(0.989);transform-origin:right">988</i>
<i class="t" style="right:121px;top:492.07px;transform:scaleX(0.989);transform-origin:right">988</i>
<i class="t" style="right:1px;top:492.07px;transform:scaleX(0.989);transform-origin:right">221</i>
<i class="t" style="right:1468px;top:521.07px;transform:scaleX(0.989);transform-origin:right">297</i>
<i class="t" style="right:1348px;top:521.07px;transform:scaleX(0.989);transform-origin:right">604</i>
<i class="t" style="right:1228px;top:521.07px;transform:scaleX(0.989);transform-origin:right">862</i>
<i class="t" style="right:1108px;top:521.07px">1.177</i>
<i class="t" style="right:988px;top:521.07px">1.703</i>
<i class="t" style="right:868px;top:521.07px">2.108</i>
<i class="t" style="right:748px;top:521.07px">2.428</i>
<i class="t" style="right:628px;top:521.07px">2.737</i>
<i class="t" style="right:508px;top:521.07px">3.066</i>
<i class="t" style="right:388px;top:521.07px">3.302</i>
<i class="t" style="right:258px;top:521.07px">3.798</i>
<i class="t" style="right:121px;top:521.07px">4.205</i>
<i class="t" style="right:1px;top:521.07px;transform:scaleX(0.989);transform-origin:right">297</i>
<i class="t" style="right:1468px;top:550.07px;transform:scaleX(0.989);transform-origin:right">21</i>
<i class="t" style="right:1348px;top:550.07px;transform:scaleX(0.989);transform-origin:right">94</i>
<i class="t" style="right:1228px;top:550.07px;transform:scaleX(0.989);transform-origin:right">198</i>
<i class="t" style="right:1108px;top:550.07px;transform:scaleX(0.989);transform-origin:right">249</i>
<i class="t" style="right:988px;top:550.07px;transform:scaleX(0.989);transform-origin:right">538</i>
<i class="t" style="right:868px;top:550.07px;transform:scaleX(0.989);transform-origin:right">563</i>
<i class="t" style="right:748px;top:550.07px;transform:scaleX(0.989);transform-origin:right">750</i>
<i class="t" style="right:628px;top:550.07px;transform:scaleX(1.035);transform-origin:right">911</i>
<i class="t" style="right:508px;top:550.07px">1.005</i>
<i class="t" style="right:388px;top:550.07px">1.140</i>
<i class="t" style="right:258px;top:550.07px">1.176</i>
<i class="t" style="right:121px;top:550.07px">1.219</i>
<i class="t" style="right:1px;top:550.07px;transform:scaleX(0.989);transform-origin:right">21</i>
<i class="t" style="right:1468px;top:579.07px;transform:scaleX(0.989);transform-origin:right">214</i>
<i class="t" style="right:1348px;top:579.07px;transform:scaleX(0.989);transform-origin:right">214</i>
<i class="t" style="right:1228px;top:579.07px;transform:scaleX(0.989);transform-origin:right">464</i>
<i class="t" style="right:1108px;top:579.07px;transform:scaleX(0.989);transform-origin:right">464</i>
<i class="t" style="right:988px;top:579.07px;transform:scaleX(0.989);transform-origin:right">464</i>
<i class="t" style="right:868px;top:579.07px;transform:scaleX(0.989);transform-origin:right">464</i>
<i class="t" style="right:748px;top:579.07px;transform:scaleX(0.989);transform-origin:right">464</i>
<i class="t" style="right:628px;top:579.07px;transform:scaleX(0.989);transform-origin:right">464</i>
<i class="t" style="right:508px;top:579.07px;transform:scaleX(0.989);transform-origin:right">464</i>
<i class="t" style="right:388px;top:579.07px;transform:scaleX(0.989);transform-origin:right">517</i>
<i class="t" style="right:258px;top:579.07px;transform:scaleX(0.989);transform-origin:right">517</i>
<i class="t" style="right:121px;top:579.07px;transform:scaleX(0.989);transform-origin:right">517</i>
<i class="t" style="right:1px;top:579.07px;transform:scaleX(0.989);transform-origin:right">214</i>
<i class="t" style="right:1468px;top:608.07px">0</i>
<i class="t" style="right:1348px;top:608.07px">6.250</i>
<i class="t" style="right:1228px;top:608.07px">8.936</i>
<i class="t" style="right:1108px;top:608.07px">12.899</i>
<i class="t" style="right:988px;top:608.07px">14.777</i>
<i class="t" style="right:868px;top:608.07px">17.906</i>
<i class="t" style="right:748px;top:608.07px">17.906</i>
<i class="t" style="right:628px;top:608.07px">19.162</i>
<i class="t" style="right:508px;top:608.07px">19.198</i>
<i class="t" style="right:388px;top:608.07px">19.957</i>
<i class="t" style="right:258px;top:608.07px">21.296</i>
<i class="t" style="right:121px;top:608.07px">21.296</i>
<i class="t" style="right:1px;top:608.07px">0</i>
<i class="t" style="right:1468px;top:637.07px;transform:scaleX(0.989);transform-origin:right">730</i>
<i class="t" style="right:1348px;top:637.07px">1.952</i>
<i class="t" style="right:1228px;top:637.07px">1.952</i>
<i class="t" style="right:1108px;top:637.07px">3.640</i>
<i class="t" style="right:988px;top:637.07px">8.253</i>
<i class="t" style="right:868px;top:637.07px">9.073</i>
<i class="t" style="right:748px;top:637.07px">9.926</i>
<i class="t" style="right:628px;top:637.07px">10.063</i>
<i class="t" style="right:508px;top:637.07px">10.942</i>
<i class="t" style="right:388px;top:637.07px">12.631</i>
<i class="t" style="right:258px;top:637.07px">12.698</i>
<i class="t" style="right:121px;top:637.07px">12.899</i>
<i class="t" style="right:1px;top:637.07px;transform:scaleX(0.989);transform-origin:right">730</i>
<i class="t" style="right:1468px;top:666.07px;transform:scaleX(0.989);transform-origin:right">545</i>
<i class="t" style="right:1348px;top:666.07px">1.104</i>
<i class="t" style="right:1228px;top:666.07px">1.535</i>
<i class="t" style="right:1108px;top:666.07px">2.853</i>
<i class="t" style="right:988px;top:666.07px">3.426</i>
<i class="t" style="right:868px;top:666.07px">4.727</i>
<i class="t" style="right:748px;top:666.07px">5.300</i>
<i class="t" style="right:628px;top:666.07px">6.049</i>
<i class="t" style="right:508px;top:666.07px">6.617</i>
<i class="t" style="right:388px;top:666.07px">7.048</i>
<i class="t" style="right:258px;top:666.07px;transform:scaleX(1.030);transform-origin:right">9.117</i>
<i class="t" style="right:121px;top:666.07px">9.259</i>
<i class="t" style="right:1px;top:666.07px;transform:scaleX(0.989);transform-origin:right">545</i>
<i class="t" style="right:1468px;top:695.07px;transform:scaleX(0.989);transform-origin:right">36</i>
<i class="t" style="right:1348px;top:695.07px;transform:scaleX(0.989);transform-origin:right">36</i>
<i class="t" style="right:1228px;top:695.07px;transform:scaleX(0.989);transform-origin:right">36</i>
<i class="t" style="right:1108px;top:695.07px;transform:scaleX(0.989);transform-origin:right">36</i>
<i class="t" style="right:988px;top:695.07px;transform:scaleX(0.989);transform-origin:right">365</i>
<i class="t" style="right:868px;top:695.07px;transform:scaleX(0.989);transform-origin:right">365</i>
<i class="t" style="right:748px;top:695.07px;transform:scaleX(0.989);transform-origin:right">365</i>
<i class="t" style="right:628px;top:695.07px;transform:scaleX(0.989);transform-origin:right">365</i>
<i class="t" style="right:508px;top:695.07px;transform:scaleX(0.989);transform-origin:right">365</i>
<i class="t" style="right:388px;top:695.07px;transform:scaleX(0.989);transform-origin:right">365</i>
<i class="t" style="right:258px;top:695.07px;transform:scaleX(0.989);transform-origin:right">365</i>
<i class="t" style="right:121px;top:695.07px;transform:scaleX(0.989);transform-origin:right">568</i>
<i class="t" style="right:1px;top:695.07px;transform:scaleX(0.989);transform-origin:right">36</i>
<i class="t" style="right:1468px;top:725.07px;transform:scaleX(0.989);transform-origin:right">500</i>
<i class="t" style="right:1348px;top:725.07px">1.239</i>
<i class="t" style="right:1228px;top:725.07px">1.858</i>
<i class="t" style="right:1108px;top:725.07px">2.477</i>
<i class="t" style="right:988px;top:725.07px">2.978</i>
<i class="t" style="right:868px;top:725.07px">3.716</i>
<i class="t" style="right:748px;top:725.07px">4.336</i>
<i class="t" style="right:628px;top:725.07px">4.955</i>
<i class="t" style="right:508px;top:725.07px">5.574</i>
<i class="t" style="right:388px;top:725.07px">6.194</i>
<i class="t" style="right:258px;top:725.07px">6.694</i>
<i class="t" style="right:121px;top:725.07px">7.314</i>
<i class="t" style="right:1px;top:725.07px;transform:scaleX(0.989);transform-origin:right">500</i>
<i class="t" style="right:1468px;top:754.07px;transform:scaleX(0.989);transform-origin:right">187</i>
<i class="t" style="right:1348px;top:754.07px;transform:scaleX(0.989);transform-origin:right">463</i>
<i class="t" style="right:1228px;top:754.07px;transform:scaleX(0.989);transform-origin:right">516</i>
<i class="t" style="right:1108px;top:754.07px;transform:scaleX(0.989);transform-origin:right">570</i>
<i class="t" style="right:988px;top:754.07px;transform:scaleX(0.989);transform-origin:right">607</i>
<i class="t" style="right:868px;top:754.07px">1.083</i>
<i class="t" style="right:748px;top:754.07px">1.083</i>
<i class="t" style="right:628px;top:754.07px">1.613</i>
<i class="t" style="right:508px;top:754.07px">2.003</i>
<i class="t" style="right:388px;top:754.07px">2.391</i>
<i class="t" style="right:258px;top:754.07px">2.644</i>
<i class="t" style="right:121px;top:754.07px">2.700</i>
<i class="t" style="right:1px;top:754.07px;transform:scaleX(0.989);transform-origin:right">187</i>
<i class="t" style="right:1468px;top:783.07px;transform:scaleX(0.989);transform-origin:right">70</i>
<i class="t" style="right:1348px;top:783.07px;transform:scaleX(0.989);transform-origin:right">571</i>
<i class="t" style="right:1228px;top:783.07px;transform:scaleX(0.989);transform-origin:right">658</i>
<i class="t" style="right:1108px;top:783.07px;transform:scaleX(0.989);transform-origin:right">718</i>
<i class="t" style="right:988px;top:783.07px;transform:scaleX(0.989);transform-origin:right">840</i>
<i class="t" style="right:868px;top:783.07px">1.709</i>
<i class="t" style="right:748px;top:783.07px">1.003</i>
<i class="t" style="right:628px;top:783.07px">1.069</i>
<i class="t" style="right:508px;top:783.07px">1.194</i>
<i class="t" style="right:388px;top:783.07px">1.375</i>
<i class="t" style="right:258px;top:783.07px">1.454</i>
<i class="t" style="right:121px;top:783.07px">2.149</i>
<i class="t" style="right:1px;top:783.07px;transform:scaleX(0.989);transform-origin:right">70</i>
<i class="t" style="right:1468px;top:812.07px;transform:scaleX(0.989);transform-origin:right">10</i>
<i class="t" style="right:1348px;top:812.07px;transform:scaleX(0.989);transform-origin:right">18</i>
<i class="t" style="right:1228px;top:812.07px;transform:scaleX(0.989);transform-origin:right">29</i>
<i class="t" style="right:1108px;top:812.07px;transform:scaleX(0.989);transform-origin:right">37</i>
<i class="t" style="right:988px;top:812.07px;transform:scaleX(0.989);transform-origin:right">42</i>
<i class="t" style="right:868px;top:812.07px;transform:scaleX(0.989);transform-origin:right">42</i>
<i class="t" style="right:748px;top:812.07px;transform:scaleX(0.989);transform-origin:right">42</i>
<i class="t" style="right:628px;top:812.07px;transform:scaleX(0.989);transform-origin:right">42</i>
<i class="t" style="right:508px;top:812.07px;transform:scaleX(0.989);transform-origin:right">58</i>
<i class="t" style="right:388px;top:812.07px;transform:scaleX(0.989);transform-origin:right">151</i>
<i class="t" style="right:258px;top:812.07px;transform:scaleX(0.989);transform-origin:right">213</i>
<i class="t" style="right:121px;top:812.07px;transform:scaleX(0.989);transform-origin:right">443</i>
<i class="t" style="right:1px;top:812.07px;transform:scaleX(0.989);transform-origin:right">10</i>
<i class="t" style="right:1468px;top:841.07px">0</i>
<i class="t" style="right:1348px;top:841.07px">1.501</i>
<i class="t" style="right:1228px;top:841.07px">1.501</i>
<i class="t" style="right:1108px;top:841.07px">1.509</i>
<i class="t" style="right:988px;top:841.07px">1.516</i>
<i class="t" style="right:868px;top:841.07px">1.516</i>
<i class="t" style="right:748px;top:841.07px">1.620</i>
<i class="t" style="right:628px;top:841.07px">2.485</i>
<i class="t" style="right:508px;top:841.07px">2.583</i>
<i class="t" style="right:388px;top:841.07px">4.207</i>
<i class="t" style="right:258px;top:841.07px">4.303</i>
<i class="t" style="right:121px;top:841.07px">4.303</i>
<i class="t" style="right:1px;top:841.07px">0</i>
<i class="t" style="right:1468px;top:870.07px;transform:scaleX(0.989);transform-origin:right">32</i>
<i class="t" style="right:1348px;top:870.07px;transform:scaleX(0.989);transform-origin:right">32</i>
<i class="t" style="right:1228px;top:870.07px;transform:scaleX(0.989);transform-origin:right">429</i>
<i class="t" style="right:1108px;top:870.07px;transform:scaleX(0.989);transform-origin:right">471</i>
<i class="t" style="right:988px;top:870.07px;transform:scaleX(0.989);transform-origin:right">526</i>
<i class="t" style="right:868px;top:870.07px;transform:scaleX(0.989);transform-origin:right">559</i>
<i class="t" style="right:748px;top:870.07px;transform:scaleX(0.989);transform-origin:right">580</i>
<i class="t" style="right:628px;top:870.07px;transform:scaleX(0.989);transform-origin:right">862</i>
<i class="t" style="right:508px;top:870.07px;transform:scaleX(0.989);transform-origin:right">862</i>
<i class="t" style="right:388px;top:870.07px;transform:scaleX(0.989);transform-origin:right">927</i>
<i class="t" style="right:258px;top:870.07px;transform:scaleX(0.989);transform-origin:right">948</i>
<i class="t" style="right:121px;top:870.07px">1.047</i>
<i class="t" style="right:1px;top:870.07px;transform:scaleX(0.989);transform-origin:right">32</i>
<i class="t" style="right:1468px;top:899.07px;transform:scaleX(0.996);transform-origin:right">102.182</i>
<i class="t" style="right:1348px;top:899.07px;transform:scaleX(0.996);transform-origin:right">102.182</i>
<i class="t" style="right:1228px;top:899.07px;transform:scaleX(0.996);transform-origin:right">172.975</i>
<i class="t" style="right:1108px;top:899.07px">21.719</i>
<i class="t" style="right:988px;top:899.07px;transform:scaleX(0.996);transform-origin:right">138.606</i>
<i class="t" style="right:868px;top:899.07px">79.699</i>
<i class="t" style="right:748px;top:899.07px;transform:scaleX(0.996);transform-origin:right">133.603</i>
<i class="t" style="right:628px;top:899.07px;transform:scaleX(0.996);transform-origin:right">132.638</i>
<i class="t" style="right:508px;top:899.07px">51.206</i>
<i class="t" style="right:388px;top:899.07px">7.735</i>
<i class="t" style="right:258px;top:899.07px">71.391</i>
<i class="t" style="right:121px;top:899.07px">66.272</i>
<i class="t" style="right:1px;top:899.07px;transform:scaleX(0.996);transform-origin:right">566.274</i>
<i class="t" style="right:1468px;top:928.07px">0</i>
<i class="t" style="right:1348px;top:928.07px">0</i>
<i class="t" style="right:1228px;top:928.07px">0</i>
<i class="t" style="right:1108px;top:928.07px">0</i>
<i class="t" style="right:988px;top:928.07px">0</i>
<i class="t" style="right:868px;top:928.07px">-95</i>
<i class="t" style="right:748px;top:928.07px">-95</i>
<i class="t" style="right:628px;top:928.07px">-95</i>
<i class="t" style="right:508px;top:928.07px">-95</i>
<i class="t" style="right:388px;top:928.07px">-95</i>
<i class="t" style="right:258px;top:928.07px">-95</i>
<i class="t" style="right:121px;top:928.07px">-95</i>
<i class="t" style="right:1px;top:928.07px">0</i>
<i class="t" style="right:1468px;top:957.07px;transform:scaleX(1.005);transform-origin:right">-7.698</i>
<i class="t" style="right:1348px;top:957.07px">-36.001</i>
<i class="t" style="right:1228px;top:957.07px">-252.053</i>
<i class="t" style="right:1108px;top:957.07px">-324.793</i>
<i class="t" style="right:988px;top:957.07px">-401.547</i>
<i class="t" style="right:868px;top:957.07px">-584.462</i>
<i class="t" style="right:748px;top:957.07px">-705.475</i>
<i class="t" style="right:628px;top:957.07px">-776.223</i>
<i class="t" style="right:508px;top:957.07px">-1.143.358</i>
<i class="t" style="right:388px;top:957.07px">-1.279.275</i>
<i class="t" style="right:258px;top:957.07px">-1.279.636</i>
<i class="t" style="right:121px;top:957.07px">-1.371.771</i>
<i class="t" style="right:1px;top:957.07px;transform:scaleX(1.005);transform-origin:right">-7.698</i>
<i class="t" style="right:1468px;top:986.07px">-167</i>
<i class="t" style="right:1348px;top:986.07px">-502</i>
<i class="t" style="right:1228px;top:986.07px;transform:scaleX(1.005);transform-origin:right">-1.129</i>
<i class="t" style="right:1108px;top:986.07px;transform:scaleX(1.005);transform-origin:right">-1.254</i>
<i class="t" style="right:988px;top:986.07px;transform:scaleX(1.005);transform-origin:right">-1.254</i>
<i class="t" style="right:868px;top:986.07px;transform:scaleX(1.005);transform-origin:right">-3.137</i>
<i class="t" style="right:748px;top:986.07px;transform:scaleX(1.005);transform-origin:right">-4.371</i>
<i class="t" style="right:628px;top:986.07px;transform:scaleX(1.005);transform-origin:right">-4.539</i>
<i class="t" style="right:508px;top:986.07px;transform:scaleX(1.005);transform-origin:right">-4.804</i>
<i class="t" style="right:388px;top:986.07px;transform:scaleX(1.005);transform-origin:right">-4.637</i>
<i class="t" style="right:258px;top:986.07px;transform:scaleX(1.005);transform-origin:right">-4.637</i>
<i class="t" style="right:121px;top:986.07px;transform:scaleX(1.005);transform-origin:right">-4.637</i>
<i class="t" style="right:1px;top:986.07px">-167</i>
<i class="t" style="right:1468px;top:1015.07px;transform:scaleX(1.058);transform-origin:right">-11</i>
<i class="t" style="right:1348px;top:1015.07px;transform:scaleX(1.058);transform-origin:right">-11</i>
<i class="t" style="right:1228px;top:1015.07px;transform:scaleX(1.058);transform-origin:right">-11</i>
<i class="t" style="right:1108px;top:1015.07px;transform:scaleX(1.058);transform-origin:right">-11</i>
<i class="t" style="right:988px;top:1015.07px;transform:scaleX(1.058);transform-origin:right">-11</i>
<i class="t" style="right:868px;top:1015.07px;transform:scaleX(1.058);transform-origin:right">-11</i>
<i class="t" style="right:748px;top:1015.07px;transform:scaleX(1.058);transform-origin:right">-11</i>
<i class="t" style="right:628px;top:1015.07px;transform:scaleX(1.058);transform-origin:right">-11</i>
<i class="t" style="right:508px;top:1015.07px;transform:scaleX(1.058);transform-origin:right">-11</i>
<i class="t" style="right:388px;top:1015.07px;transform:scaleX(1.058);transform-origin:right">-11</i>
<i class="t" style="right:258px;top:1015.07px;transform:scaleX(1.058);transform-origin:right">-11</i>
<i class="t" style="right:121px;top:1015.07px;transform:scaleX(1.058);transform-origin:right">-11</i>
<i class="t" style="right:1px;top:1015.07px;transform:scaleX(1.058);transform-origin:right">-11</i>
<i class="t" style="right:1468px;top:1044.07px">0</i>
<i class="t" style="right:1348px;top:1044.07px">0</i>
<i class="t" style="right:1228px;top:1044.07px">0</i>
<i class="t" style="right:1108px;top:1044.07px">0</i>
<i class="t" style="right:988px;top:1044.07px">0</i>
<i class="t" style="right:868px;top:1044.07px">0</i>
<i class="t" style="right:748px;top:1044.07px">-100</i>
<i class="t" style="right:628px;top:1044.07px">-100</i>
<i class="t" style="right:508px;top:1044.07px">-100</i>
<i class="t" style="right:388px;top:1044.07px">-100</i>
<i class="t" style="right:258px;top:1044.07px">-100</i>
<i class="t" style="right:121px;top:1044.07px">-100</i>
<i class="t" style="right:1px;top:1044.07px">0</i>
<i class="t" style="right:1468px;top:1073.07px">0</i>
<i class="t" style="right:1348px;top:1073.07px">0</i>
<i class="t" style="right:1228px;top:1073.07px">0</i>
<i class="t" style="right:1108px;top:1073.07px">0</i>
<i class="t" style="right:988px;top:1073.07px;transform:scaleX(1.005);transform-origin:right">-3.286</i>
<i class="t" style="right:868px;top:1073.07px;transform:scaleX(1.005);transform-origin:right">-3.286</i>
<i class="t" style="right:748px;top:1073.07px;transform:scaleX(1.005);transform-origin:right">-3.286</i>
<i class="t" style="right:628px;top:1073.07px;transform:scaleX(1.005);transform-origin:right">-3.286</i>
<i class="t" style="right:508px;top:1073.07px;transform:scaleX(1.005);transform-origin:right">-3.286</i>
<i class="t" style="right:388px;top:1073.07px;transform:scaleX(1.005);transform-origin:right">-3.286</i>
<i class="t" style="right:258px;top:1073.07px;transform:scaleX(1.005);transform-origin:right">-3.286</i>
<i class="t" style="right:121px;top:1073.07px;transform:scaleX(1.005);transform-origin:right">-3.286</i>
<i class="t" style="right:1px;top:1073.07px">0</i>
<i class="t" style="right:1468px;top:1102.07px">0</i>
<i class="t" style="right:1348px;top:1102.07px">0</i>
<i class="t" style="right:1228px;top:1102.07px">0</i>
<i class="t" style="right:1108px;top:1102.07px">0</i>
<i class="t" style="right:988px;top:1102.07px">0</i>
<i class="t" style="right:868px;top:1102.07px">0</i>
<i class="t" style="right:748px;top:1102.07px">0</i>
<i class="t" style="right:628px;top:1102.07px">-412</i>
<i class="t" style="right:508px;top:1102.07px">-408</i>
<i class="t" style="right:388px;top:1102.07px">-404</i>
<i class="t" style="right:258px;top:1102.07px">-400</i>
<i class="t" style="right:121px;top:1102.07px">-400</i>
<i class="t" style="right:1px;top:1102.07px">0</i>
<i class="t" style="right:1468px;top:1131.07px">0</i>
<i class="t" style="right:1348px;top:1131.07px">0</i>
<i class="t" style="right:1228px;top:1131.07px">0</i>
<i class="t" style="right:1108px;top:1131.07px">0</i>
<i class="t" style="right:988px;top:1131.07px">0</i>
<i class="t" style="right:868px;top:1131.07px">0</i>
<i class="t" style="right:748px;top:1131.07px">0</i>
<i class="t" style="right:628px;top:1131.07px">-26</i>
<i class="t" style="right:508px;top:1131.07px">-29</i>
<i class="t" style="right:388px;top:1131.07px">-33</i>
<i class="t" style="right:258px;top:1131.07px">-36</i>
<i class="t" style="right:121px;top:1131.07px">-39</i>
<i class="t" style="right:1px;top:1131.07px">0</i>
<i class="t" style="right:1468px;top:1160.07px">-27</i>
<i class="t" style="right:1348px;top:1160.07px">-54</i>
<i class="t" style="right:1228px;top:1160.07px">-81</i>
<i class="t" style="right:1108px;top:1160.07px">-108</i>
<i class="t" style="right:988px;top:1160.07px">-134</i>
<i class="t" style="right:868px;top:1160.07px">-161</i>
<i class="t" style="right:748px;top:1160.07px">-188</i>
<i class="t" style="right:628px;top:1160.07px">-222</i>
<i class="t" style="right:508px;top:1160.07px">-249</i>
<i class="t" style="right:388px;top:1160.07px">-276</i>
<i class="t" style="right:258px;top:1160.07px">-303</i>
<i class="t" style="right:121px;top:1160.07px">-326</i>
<i class="t" style="right:1px;top:1160.07px">-27</i>
<i class="t" style="right:1468px;top:1189.07px;transform:scaleX(0.989);transform-origin:right">125</i>
<i class="t" style="right:1348px;top:1189.07px;transform:scaleX(0.989);transform-origin:right">132</i>
<i class="t" style="right:1228px;top:1189.07px;transform:scaleX(0.989);transform-origin:right">132</i>
<i class="t" style="right:1108px;top:1189.07px;transform:scaleX(0.989);transform-origin:right">259</i>
<i class="t" style="right:988px;top:1189.07px;transform:scaleX(0.989);transform-origin:right">259</i>
<i class="t" style="right:868px;top:1189.07px;transform:scaleX(0.989);transform-origin:right">259</i>
<i class="t" style="right:748px;top:1189.07px;transform:scaleX(0.989);transform-origin:right">266</i>
<i class="t" style="right:628px;top:1189.07px;transform:scaleX(0.989);transform-origin:right">266</i>
<i class="t" style="right:508px;top:1189.07px;transform:scaleX(0.989);transform-origin:right">266</i>
<i class="t" style="right:388px;top:1189.07px;transform:scaleX(0.989);transform-origin:right">266</i>
<i class="t" style="right:258px;top:1189.07px;transform:scaleX(0.989);transform-origin:right">266</i>
<i class="t" style="right:121px;top:1189.07px;transform:scaleX(0.989);transform-origin:right">266</i>
<i class="t" style="right:1px;top:1189.07px;transform:scaleX(0.989);transform-origin:right">125</i>
<i class="t" style="right:1468px;top:1218.07px">-102.182</i>
<i class="t" style="right:1348px;top:1218.07px">-102.182</i>
<i class="t" style="right:1228px;top:1218.07px">-172.975</i>
<i class="t" style="right:1108px;top:1218.07px">-21.719</i>
<i class="t" style="right:988px;top:1218.07px">-138.606</i>
<i class="t" style="right:868px;top:1218.07px">-79.699</i>
<i class="t" style="right:748px;top:1218.07px">-133.603</i>
<i class="t" style="right:628px;top:1218.07px">-132.638</i>
<i class="t" style="right:508px;top:1218.07px">-51.206</i>
<i class="t" style="right:388px;top:1218.07px;transform:scaleX(1.005);transform-origin:right">-7.735</i>
<i class="t" style="right:258px;top:1218.07px">-71.391</i>
<i class="t" style="right:121px;top:1218.07px">-66.272</i>
<i class="t" style="right:1px;top:1218.07px">-102.182</i>
<i class="t" style="right:1468px;top:1247.07px">0</i>
<i class="t" style="right:1348px;top:1247.07px">0</i>
<i class="t" style="right:1228px;top:1247.07px">0</i>
<i class="t" style="right:1108px;top:1247.07px">0</i>
<i class="t" style="right:988px;top:1247.07px">0</i>
<i class="t" style="right:868px;top:1247.07px">0</i>
<i class="t" style="right:748px;top:1247.07px">0</i>
<i class="t" style="right:628px;top:1247.07px">0</i>
<i class="t" style="right:508px;top:1247.07px">0</i>
<i class="t" style="right:388px;top:1247.07px">0</i>
<i class="t" style="right:258px;top:1247.07px">0</i>
<i class="t" style="right:121px;top:1247.07px">0</i>
<i class="t" style="right:1px;top:1247.07px">45.932</i>
<i class="t" style="right:1468px;top:1276.07px">0</i>
<i class="t" style="right:1348px;top:1276.07px">0</i>
<i class="t" style="right:1228px;top:1276.07px">0</i>
<i class="t" style="right:1108px;top:1276.07px">0</i>
<i class="t" style="right:988px;top:1276.07px">0</i>
<i class="t" style="right:868px;top:1276.07px">0</i>
<i class="t" style="right:748px;top:1276.07px">0</i>
<i class="t" style="right:628px;top:1276.07px">0</i>
<i class="t" style="right:508px;top:1276.07px">0</i>
<i class="t" style="right:388px;top:1276.07px">0</i>
<i class="t" style="right:258px;top:1276.07px">0</i>
<i class="t" style="right:121px;top:1276.07px">0</i>
<i class="t" style="right:1px;top:1276.07px">-17.778</i>
<i class="t" style="right:1468px;top:1305.07px">0</i>
<i class="t" style="right:1348px;top:1305.07px">0</i>
<i class="t" style="right:1228px;top:1305.07px">0</i>
<i class="t" style="right:1108px;top:1305.07px">0</i>
<i class="t" style="right:988px;top:1305.07px">0</i>
<i class="t" style="right:868px;top:1305.07px">0</i>
<i class="t" style="right:748px;top:1305.07px">0</i>
<i class="t" style="right:628px;top:1305.07px">0</i>
<i class="t" style="right:508px;top:1305.07px">0</i>
<i class="t" style="right:388px;top:1305.07px">0</i>
<i class="t" style="right:258px;top:1305.07px">0</i>
<i class="t" style="right:121px;top:1305.07px">0</i>
<i class="t" style="right:1px;top:1305.07px;transform:scaleX(0.996);transform-origin:right">101.435</i>
<i class="t" style="right:1468px;top:1334.07px">0</i>
<i class="t" style="right:1348px;top:1334.07px">0</i>
<i class="t" style="right:1228px;top:1334.07px">0</i>
<i class="t" style="right:1108px;top:1334.07px">0</i>
<i class="t" style="right:988px;top:1334.07px">0</i>
<i class="t" style="right:868px;top:1334.07px">0</i>
<i class="t" style="right:748px;top:1334.07px">0</i>
<i class="t" style="right:628px;top:1334.07px">0</i>
<i class="t" style="right:508px;top:1334.07px">0</i>
<i class="t" style="right:388px;top:1334.07px">0</i>
<i class="t" style="right:258px;top:1334.07px">0</i>
<i class="t" style="right:121px;top:1334.07px">0</i>
<i class="t" style="right:1px;top:1334.07px">0</i>
<i class="t" style="right:1468px;top:1363.07px">0</i>
<i class="t" style="right:1348px;top:1363.07px">0</i>
<i class="t" style="right:1228px;top:1363.07px">0</i>
<i class="t" style="right:1108px;top:1363.07px">0</i>
<i class="t" style="right:988px;top:1363.07px">0</i>
<i class="t" style="right:868px;top:1363.07px">0</i>
<i class="t" style="right:748px;top:1363.07px">0</i>
<i class="t" style="right:628px;top:1363.07px">0</i>
<i class="t" style="right:508px;top:1363.07px">0</i>
<i class="t" style="right:388px;top:1363.07px">0</i>
<i class="t" style="right:258px;top:1363.07px">0</i>
<i class="t" style="right:121px;top:1363.07px">71.471</i>
<i class="t" style="right:1px;top:1363.07px">0</i>
<i class="t" style="right:1468px;top:1392.07px">0</i>
<i class="t" style="right:1348px;top:1392.07px">0</i>
<i class="t" style="right:1228px;top:1392.07px">0</i>
<i class="t" style="right:1108px;top:1392.07px">0</i>
<i class="t" style="right:988px;top:1392.07px">0</i>
<i class="t" style="right:868px;top:1392.07px">0</i>
<i class="t" style="right:748px;top:1392.07px">0</i>
<i class="t" style="right:628px;top:1392.07px">0</i>
<i class="t" style="right:508px;top:1392.07px">0</i>
<i class="t" style="right:388px;top:1392.07px">0</i>
<i class="t" style="right:258px;top:1392.07px">0</i>
<i class="t" style="right:121px;top:1392.07px">0</i>
<i class="t" style="right:1px;top:1392.07px">0</i>
<i class="t" style="right:1468px;top:1421.07px">0</i>
<i class="t" style="right:1348px;top:1421.07px">0</i>
<i class="t" style="right:1228px;top:1421.07px">0</i>
<i class="t" style="right:1108px;top:1421.07px">0</i>
<i class="t" style="right:988px;top:1421.07px">0</i>
<i class="t" style="right:868px;top:1421.07px">0</i>
<i class="t" style="right:748px;top:1421.07px">0</i>
<i class="t" style="right:628px;top:1421.07px">0</i>
<i class="t" style="right:508px;top:1421.07px">0</i>
<i class="t" style="right:388px;top:1421.07px">0</i>
<i class="t" style="right:258px;top:1421.07px">0</i>
<i class="t" style="right:121px;top:1421.07px">0</i>
<i class="t" style="right:1px;top:1421.07px">0</i>
<i class="t" style="right:1468px;top:1450.07px">0</i>
<i class="t" style="right:1348px;top:1450.07px">0</i>
<i class="t" style="right:1228px;top:1450.07px">0</i>
<i class="t" style="right:1108px;top:1450.07px">0</i>
<i class="t" style="right:988px;top:1450.07px">0</i>
<i class="t" style="right:868px;top:1450.07px">0</i>
<i class="t" style="right:748px;top:1450.07px">0</i>
<i class="t" style="right:628px;top:1450.07px">0</i>
<i class="t" style="right:508px;top:1450.07px">0</i>
<i class="t" style="right:388px;top:1450.07px">0</i>
<i class="t" style="right:258px;top:1450.07px">0</i>
<i class="t" style="right:121px;top:1450.07px">0</i>
<i class="t" style="right:1px;top:1450.07px">0</i>
<i class="t" style="right:1468px;top:1450.07px">0</i>
<i class="t" style="right:1348px;top:1450.07px">0</i>
<i class="t" style="right:1228px;top:1450.07px">0</i>
<i class="t" style="right:1108px;top:1450.07px">0</i>
<i class="t" style="right:988px;top:1450.07px">0</i>
<i class="t" style="right:868px;top:1450.07px">0</i>
<i class="t" style="right:748px;top:1450.07px">0</i>
<i class="t" style="right:628px;top:1450.07px">0</i>
<i class="t" style="right:508px;top:1450.07px">0</i>
<i class="t" style="right:388px;top:1450.07px">0</i>
<i class="t" style="right:258px;top:1450.07px">0</i>
<i class="t" style="right:121px;top:1450.07px">0</i>
<i class="t" style="right:1px;top:1450.07px">0</i>
<svg width="3684" height="1444" viewBox="0 0 3684 1444"><path d="M1360.0 146.0 C1355.0 146.1 1337.0 146.5 1330.0 146.8 C1323.0 147.1 1320.0 147.8 1318.0 148.0" fill="none" stroke="#c01c1a" stroke-width="6.5" stroke-linecap="round" stroke-linejoin="round"/><path d="M1317.0 137.5 C1315.7 138.4 1310.9 140.7 1309.2 142.8 C1307.5 144.9 1306.7 147.8 1307.0 150.0 C1307.3 152.2 1309.0 154.6 1311.0 156.2 C1313.0 157.8 1317.7 159.2 1319.0 159.8" fill="none" stroke="#c01c1a" stroke-width="6.7" stroke-linecap="round" stroke-linejoin="round"/><path d="M1798.0 273.9 C1795.2 273.6 1786.9 272.9 1781.4 272.3 C1775.9 271.8 1771.3 270.7 1764.8 270.6 C1758.3 270.5 1750.0 271.5 1742.6 271.7 C1735.2 271.9 1726.9 271.8 1720.4 271.7 C1713.9 271.6 1708.4 271.3 1703.8 270.9 C1699.2 270.5 1696.1 269.2 1692.7 269.5 C1689.3 269.8 1685.9 271.0 1683.3 272.5 C1680.7 274.0 1678.7 276.2 1677.2 278.6 C1675.7 281.0 1674.9 283.9 1674.4 286.9 C1673.9 289.9 1673.9 293.5 1674.4 296.4 C1674.9 299.3 1675.5 302.2 1677.2 304.1 C1678.9 306.0 1680.9 307.2 1684.4 307.7 C1687.9 308.2 1693.7 307.3 1698.3 307.2 C1702.9 307.1 1706.6 306.6 1712.1 307.2 C1717.6 307.8 1724.6 310.1 1731.5 310.8 C1738.4 311.5 1746.3 311.5 1753.7 311.6 C1761.1 311.7 1770.8 312.0 1775.9 311.6 C1781.0 311.2 1782.1 310.7 1784.2 309.1 C1786.3 307.5 1787.6 304.6 1788.6 301.9 C1789.6 299.2 1789.6 295.9 1790.3 293.0 C1791.0 290.1 1791.9 287.1 1793.0 284.2 C1794.1 281.2 1796.2 276.8 1796.9 275.3" fill="none" stroke="#c01c1a" stroke-width="5.6" stroke-linecap="round" stroke-linejoin="round"/><path d="M813.9 1346.0 C813.8 1345.0 815.4 1341.7 813.0 1340.0 C810.6 1338.3 804.9 1336.2 799.3 1335.6 C793.7 1335.0 787.0 1334.6 779.5 1336.3 C772.0 1338.0 760.8 1342.5 754.3 1346.0 C747.8 1349.5 742.8 1354.0 740.4 1357.4 C738.0 1360.8 738.5 1362.7 740.0 1366.4 C741.5 1370.1 739.5 1377.9 749.4 1379.6 C759.3 1381.3 786.9 1377.4 799.3 1376.5 C811.7 1375.6 817.8 1375.9 823.6 1374.0 C829.4 1372.1 832.6 1370.2 834.0 1365.0 C835.4 1359.8 833.4 1348.0 832.0 1342.9 C830.6 1337.8 828.2 1335.9 825.7 1334.6 C823.2 1333.3 818.7 1334.9 817.3 1335.0" fill="none" stroke="#c01c1a" stroke-width="6.0" stroke-linecap="round" stroke-linejoin="round"/><path d="M3581.4 134.5 C3581.8 136.3 3583.3 141.8 3584.0 145.4 C3584.7 149.0 3585.4 153.6 3585.3 156.3 C3585.2 159.0 3585.3 160.2 3583.4 161.5 C3581.5 162.8 3578.5 164.0 3573.7 164.4 C3568.9 164.8 3560.8 164.0 3554.4 163.7 C3548.0 163.4 3541.5 162.9 3535.1 162.4 C3528.7 161.9 3522.2 161.0 3515.8 160.8 C3509.4 160.6 3502.9 161.4 3496.5 161.2 C3490.1 161.0 3482.8 160.5 3477.2 159.5 C3471.6 158.5 3466.3 156.8 3463.0 155.0 C3459.7 153.2 3458.0 150.9 3457.2 148.6 C3456.3 146.2 3456.4 143.5 3457.9 140.9 C3459.4 138.3 3463.0 135.6 3466.2 133.2 C3469.4 130.8 3472.7 128.4 3477.2 126.7 C3481.7 125.0 3487.9 123.6 3493.3 122.9 C3498.7 122.2 3502.4 122.7 3509.4 122.5 C3516.4 122.3 3527.6 122.0 3535.1 121.9 C3542.6 121.9 3548.5 121.9 3554.4 122.2 C3560.3 122.5 3566.1 122.8 3570.5 123.8 C3574.9 124.8 3579.1 127.3 3580.8 128.0" fill="none" stroke="#c01c1a" stroke-width="5.8" stroke-linecap="round" stroke-linejoin="round"/><path d="M3513.8 158.8 L3512.9 164.1 L3511.7 169.3 L3510.2 174.3 L3508.4 179.2 L3506.3 184.0 L3504.1 188.6 L3501.6 193.2 L3499.0 197.8 L3496.3 202.2 L3493.5 206.6 L3490.6 211.0 L3487.7 215.4 L3484.8 219.7 L3481.9 224.1 L3478.9 228.4 L3476.0 232.8 L3473.0 237.1 L3470.0 241.5 L3467.0 245.8 L3464.0 250.1 L3461.0 254.4 L3458.0 258.7 L3454.9 263.0 L3451.9 267.2 L3448.8 271.5 L3445.7 275.7 L3442.6 280.0 L3439.5 284.2 L3436.4 288.4 L3433.2 292.6 L3430.0 296.8 L3426.8 300.9 L3423.6 305.1 L3420.4 309.2 L3417.1 313.3 L3413.8 317.4 L3410.5 321.4 L3407.2 325.5 L3403.8 329.5 L3400.5 333.5 L3397.1 337.5 L3393.6 341.5 L3390.2 345.4 L3386.7 349.3 L3383.2 353.2 L3379.7 357.0 L3376.1 360.9 L3372.5 364.7 L3368.9 368.4 L3365.2 372.2 L3361.6 375.9 L3357.8 379.6 L3354.1 383.2 L3350.3 386.9 L3346.5 390.4 L3342.7 394.0 L3338.8 397.5 L3334.9 401.0 L3330.9 404.5 L3326.9 407.9 L3322.9 411.3 L3318.8 414.6 L3314.7 417.9 L3310.6 421.2 L3306.5 424.4 L3302.3 427.7 L3298.1 430.9 L3293.9 434.1 L3289.7 437.3 L3285.5 440.5 L3281.4 443.7 L3277.2 446.9 L3273.1 450.2 L3269.0 453.4 L3265.0 456.7 L3260.9 460.1 L3257.0 463.4 L3253.1 466.9 L3249.2 470.4 L3245.5 473.9 L3241.8 477.5 L3238.2 481.2 L3234.6 485.0 L3231.2 488.8 L3227.9 492.7 L3224.7 496.8 L3221.6 500.9 L3218.6 505.1 L3215.7 509.5 L3213.0 513.9 L3210.4 518.5 L3207.9 523.1 L3205.4 527.8 L3203.0 532.6 L3200.6 537.4 L3198.3 542.1 L3195.9 546.9 L3193.4 551.7 L3190.9 556.4 L3188.3 561.0 L3185.6 565.5 L3182.8 570.0 L3179.9 574.3 L3176.9 578.6 L3173.7 582.8 L3170.5 586.9 L3167.2 591.0 L3163.8 594.9 L3160.4 598.9 L3156.9 602.7 L3153.4 606.5 L3149.7 610.3 L3146.1 614.0 L3142.4 617.7 L3138.6 621.3 L3134.8 624.9 L3131.0 628.4 L3127.1 631.9 L3123.2 635.3 L3119.2 638.8 L3115.3 642.2 L3111.2 645.5 L3107.2 648.8 L3103.1 652.1 L3099.0 655.4 L3094.9 658.6 L3090.7 661.8 L3086.6 665.0 L3082.4 668.2 L3078.2 671.4 L3074.0 674.5 L3069.8 677.7 L3065.5 680.8 L3061.3 683.9 L3057.1 687.0 L3052.8 690.1 L3048.6 693.2 L3044.3 696.2 L3040.0 699.3 L3035.8 702.3 L3031.5 705.4 L3027.2 708.4 L3022.9 711.4 L3018.6 714.4 L3014.3 717.4 L3009.9 720.3 L3005.6 723.3 L3001.2 726.2 L2996.9 729.1 L2992.5 732.0 L2988.1 734.9 L2983.8 737.8 L2979.4 740.6 L2974.9 743.5 L2970.5 746.3 L2966.1 749.1 L2961.6 751.8 L2957.2 754.6 L2952.7 757.3 L2948.2 760.0 L2943.7 762.7 L2939.2 765.4 L2934.7 768.0 L2930.2 770.7 L2925.6 773.3 L2921.1 775.9 L2916.5 778.5 L2912.0 781.1 L2907.4 783.7 L2902.8 786.2 L2898.2 788.8 L2893.6 791.3 L2889.0 793.8 L2884.4 796.4 L2879.8 798.9 L2875.2 801.4 L2870.6 803.9 L2866.0 806.4 L2861.4 808.9 L2856.7 811.4 L2852.1 813.9 L2847.5 816.4 L2842.9 818.8 L2838.3 821.3 L2833.6 823.8 L2829.0 826.3 L2824.4 828.8 L2819.8 831.3 L2815.2 833.8 L2810.6 836.3 L2806.0 838.9 L2801.4 841.4 L2796.8 843.9 L2792.2 846.5 L2787.6 849.0 L2783.0 851.6 L2778.4 854.1 L2773.9 856.7 L2769.3 859.3 L2764.7 861.8 L2760.2 864.4 L2755.6 867.0 L2751.0 869.6 L2746.5 872.2 L2741.9 874.8 L2737.4 877.4 L2732.8 880.0 L2728.3 882.6 L2723.8 885.3 L2719.2 887.9 L2714.7 890.5 L2710.2 893.2 L2705.6 895.8 L2701.1 898.5 L2696.6 901.1 L2692.1 903.8 L2687.6 906.5 L2683.0 909.1 L2678.5 911.8 L2674.0 914.5 L2669.5 917.1 L2665.0 919.8 L2660.5 922.5 L2656.0 925.2 L2651.5 927.9 L2647.0 930.6 L2642.5 933.3 L2638.0 936.0 L2633.6 938.7 L2629.1 941.4 L2624.6 944.1 L2620.1 946.9 L2615.6 949.6 L2611.1 952.3 L2606.7 955.0 L2602.2 957.8 L2597.7 960.5 L2593.2 963.2 L2588.8 966.0 L2584.3 968.7 L2579.8 971.4 L2575.3 974.2 L2570.9 976.9 L2566.4 979.7 L2561.9 982.4 L2557.5 985.1 L2553.0 987.9 L2548.5 990.6 L2544.1 993.4 L2539.6 996.1 L2535.1 998.9 L2530.7 1001.6 L2526.2 1004.4 L2521.7 1007.2 L2517.3 1009.9 L2512.8 1012.7 L2508.4 1015.4 L2503.9 1018.2 L2499.4 1021.0 L2495.0 1023.7 L2490.5 1026.5 L2486.1 1029.2 L2481.6 1032.0 L2477.1 1034.8 L2472.7 1037.5 L2468.2 1040.3 L2463.8 1043.1 L2459.3 1045.8 L2454.9 1048.6 L2450.4 1051.4 L2445.9 1054.1 L2441.5 1056.9 L2437.0 1059.7 L2432.6 1062.4 L2428.1 1065.2 L2423.6 1068.0 L2419.2 1070.7 L2414.7 1073.5 L2410.3 1076.3 L2405.8 1079.0 L2401.4 1081.8 L2396.9 1084.5 L2392.4 1087.3 L2388.0 1090.1 L2383.5 1092.8 L2379.0 1095.6 L2374.6 1098.4 L2370.1 1101.1 L2365.7 1103.9 L2361.2 1106.6 L2356.7 1109.4 L2352.3 1112.1 L2347.8 1114.9 L2343.3 1117.6 L2338.9 1120.4 L2334.4 1123.1 L2329.9 1125.9 L2325.4 1128.6 L2321.0 1131.4 L2316.5 1134.1 L2312.0 1136.8 L2307.5 1139.5 L2303.0 1142.3 L2298.5 1145.0 L2294.1 1147.7 L2289.6 1150.4 L2285.1 1153.1 L2280.6 1155.8 L2276.1 1158.5 L2271.6 1161.2 L2267.0 1163.8 L2262.5 1166.5 L2258.0 1169.2 L2253.5 1171.8 L2249.0 1174.4 L2244.4 1177.1 L2239.9 1179.7 L2235.3 1182.3 L2230.8 1184.9 L2226.2 1187.5 L2221.7 1190.1 L2217.1 1192.7 L2212.5 1195.2 L2208.0 1197.8 L2203.4 1200.3 L2198.8 1202.9 L2194.2 1205.4 L2189.6 1207.9 L2185.0 1210.4 L2180.4 1212.9 L2175.7 1215.3 L2171.1 1217.8 L2166.5 1220.2 L2161.8 1222.6 L2157.2 1225.1 L2152.5 1227.5 L2147.9 1229.8 L2143.2 1232.2 L2138.5 1234.6 L2133.8 1236.9 L2129.1 1239.2 L2124.4 1241.6 L2119.7 1243.9 L2115.0 1246.1 L2110.3 1248.4 L2105.5 1250.7 L2100.8 1252.9 L2096.1 1255.1 L2091.3 1257.3 L2086.5 1259.5 L2081.8 1261.7 L2077.0 1263.8 L2072.2 1266.0 L2067.4 1268.1 L2062.6 1270.2 L2057.9 1272.4 L2053.1 1274.6 L2048.4 1276.8 L2043.7 1279.1 L2039.0 1281.4 L2034.3 1283.8 L2036.2 1283.2 C2032.7 1285.0 2022.3 1290.2 2015.4 1294.3 C2008.5 1298.4 2001.2 1303.7 1994.7 1308.1 C1988.2 1312.5 1981.7 1317.3 1976.7 1320.6 C1971.7 1323.9 1969.4 1325.8 1964.8 1327.7 C1960.2 1329.6 1953.9 1330.9 1949.0 1331.7 C1944.1 1332.5 1939.5 1331.5 1935.5 1332.5 C1931.5 1333.5 1928.6 1336.0 1925.2 1338.0 C1921.8 1340.0 1919.5 1342.0 1914.9 1344.3 C1910.3 1346.5 1903.0 1349.0 1897.5 1351.5 C1892.0 1354.0 1887.0 1357.8 1881.7 1359.4 C1876.4 1361.1 1870.3 1360.9 1865.8 1361.4 C1861.3 1361.9 1856.6 1362.3 1854.8 1362.5" fill="none" stroke="#c01c1a" stroke-width="5.8" stroke-linecap="round" stroke-linejoin="round"/><path d="M1865.8 1344.3 C1865.2 1345.6 1864.0 1349.6 1861.9 1352.3 C1859.8 1355.0 1854.7 1357.7 1853.2 1360.2 C1851.8 1362.7 1852.4 1364.8 1853.2 1367.3 C1854.0 1369.8 1855.8 1373.3 1857.9 1375.2 C1860.0 1377.1 1864.5 1377.9 1865.8 1378.4" fill="none" stroke="#c01c1a" stroke-width="5.8" stroke-linecap="round" stroke-linejoin="round"/></svg>
</body></html>
